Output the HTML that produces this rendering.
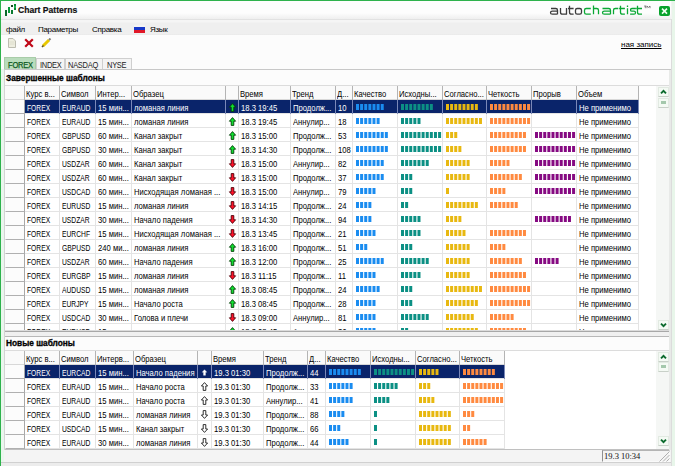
<!DOCTYPE html>
<html><head><meta charset="utf-8">
<style>
*{margin:0;padding:0;box-sizing:border-box}
html,body{width:675px;height:466px;overflow:hidden;background:#f3f3f3;font-family:"Liberation Sans",sans-serif;color:#000}
div,svg,i,span{position:absolute}
.hdr{height:14px;background:#fafafa;border-bottom:1px solid #d8d8d8}
.hc{height:14px;border-right:1px solid #b4b4b4;font-size:8.5px;line-height:16px;padding-left:2px;white-space:nowrap;overflow:hidden;color:#000}
.rh{height:14px;background:#fcfcfc;border-bottom:1px solid #b0b0b0;border-right:1px solid #a8a8a8;border-left:1px solid #fcfcfc}
.row{height:14px;background:#fff;border-bottom:1px solid #e4e4e4}
.row.sel{background:#0a246a;border-bottom-color:#e4e4e4}
.c{height:14px;border-right:1px solid #e4e4e4;font-size:8.5px;line-height:16px;padding-left:2px;white-space:nowrap;overflow:hidden;color:#000}
.c.s{color:#fff;border-right-color:#7a88b8}
.u{position:static;display:inline-block;transform:scaleX(.88);transform-origin:0 0}
.c .u,.hc .u{transform:scaleX(.79)}
.x{position:static;display:inline-block;transform:scaleX(.9);transform-origin:0 0}
i{width:3px;height:6px;display:block}
.ar{overflow:visible}
.sbtn{width:11px;height:10px;background:#f4faf4;border:1px solid #e2eae2;border-bottom-color:#c8d0c8}
</style></head><body>
<!-- window frame -->
<div style="left:0;top:0;width:675px;height:1px;background:#2eb24c"></div>
<div style="left:0;top:0;width:1px;height:466px;background:#2eb24c"></div>
<div style="left:1px;top:1px;width:3px;height:465px;background:#eaf7ed"></div>
<div style="left:672px;top:1px;width:3px;height:465px;background:#e8f6ea"></div>
<div style="left:671px;top:19px;width:1px;height:447px;background:#dcdcdc"></div>
<!-- title bar -->
<div style="left:1px;top:1px;width:670px;height:19px;background:linear-gradient(#fdfdfd 0,#fdfdfd 12px,#efefef 18px)"></div>
<svg style="left:4px;top:4px" width="13" height="12" viewBox="0 0 13 12">
 <rect x="1" y="6" width="2" height="6" fill="#0a6a2a"/>
 <rect x="4" y="3" width="2" height="6" fill="#0a9a3a"/>
 <rect x="7" y="6" width="2" height="4" fill="#0a7a30"/>
 <rect x="7" y="1" width="2" height="2" fill="#1a4a22"/>
 <rect x="10" y="0" width="2" height="6" fill="#0a8a34"/>
 <rect x="10" y="2.5" width="2" height="1" fill="#30e070"/>
</svg>
<div style="left:18px;top:4px;font-size:8.6px;font-weight:bold;color:#111;white-space:nowrap;line-height:12px;-webkit-text-stroke:0.2px #111">Chart Patterns</div>
<svg style="left:0;top:0" width="675" height="20" viewBox="0 0 675 20">
<g fill="none" stroke-width="1.3" stroke-linecap="butt" stroke-linejoin="round">
<path stroke="#3c3c3c" d="M551 8.5 H555.7 Q557.5 8.5 557.5 10.3 V14.2 M557.5 11.2 H552.4 Q550.5 11.2 550.5 12.7 Q550.5 14.2 552.4 14.2 H557.5
M560.5 8 V12.2 Q560.5 14.2 562.5 14.2 H566.5 V8
M569.5 5.8 V12.2 Q569.5 14.2 571.5 14.2 H573.6 M568 8.5 H573.6
M577.2 8.5 H579.8 Q581.5 8.5 581.5 10.3 V12.4 Q581.5 14.2 579.8 14.2 H577.2 Q575.5 14.2 575.5 12.4 V10.3 Q575.5 8.5 577.2 8.5 Z"/>
<path stroke="#0aa834" d="M590.8 8.5 H586.3 Q584.5 8.5 584.5 10.3 V12.4 Q584.5 14.2 586.3 14.2 H590.8
M593.5 5.6 V14.2 M593.5 8.5 H596.7 Q598.5 8.5 598.5 10.3 V14.2
M602.5 8.5 H608.7 Q610.5 8.5 610.5 10.3 V14.2 M610.5 11.2 H604.4 Q602.5 11.2 602.5 12.7 Q602.5 14.2 604.4 14.2 H610.5
M613.5 14.2 V10.3 Q613.5 8.5 615.3 8.5 H618.3
M620.5 5.8 V12.2 Q620.5 14.2 622.5 14.2 H624.9 M619.1 8.5 H624.9
M627.5 8.2 V14.2 M627.5 5.6 V7
M635.9 8.5 H632 Q630.5 8.5 630.5 9.9 Q630.5 11.2 632 11.2 H634 Q635.5 11.2 635.5 12.7 Q635.5 14.2 634 14.2 H630.1
M637.5 5.8 V12.2 Q637.5 14.2 639.5 14.2 H642 M636.2 8.5 H642"/>
<path stroke="#555" stroke-width="0.7" d="M644.2 6 H646.4 M645.3 6 V8.2 M647 8.2 V6 L648.5 7.4 L650 6 V8.2"/>
</g></svg>
<div style="left:659px;top:6px;width:11px;height:10px;background:#08a22c;border-radius:2px"></div>
<svg style="left:659px;top:6px" width="11" height="11" viewBox="0 0 11 11"><path d="M3 2.6 L8 7.6 M8 2.6 L3 7.6" stroke="#f0fff0" stroke-width="1.6"/></svg>
<!-- menu bar -->
<div style="left:1px;top:19px;width:670px;height:1px;background:#e2e2e2"></div>
<div style="left:1px;top:20px;width:670px;height:15px;background:linear-gradient(#f5f5f5 0,#f5f5f5 2px,#efefef 3px,#efefef 14px,#e8e8e8 15px)"></div>
<div style="left:6px;top:24px;font-size:8px;line-height:12px;white-space:nowrap;color:#000;letter-spacing:-0.3px">файл</div>
<div style="left:38px;top:24px;font-size:8px;line-height:12px;white-space:nowrap;color:#000;letter-spacing:-0.3px">Параметры</div>
<div style="left:92px;top:24px;font-size:8px;line-height:12px;white-space:nowrap;color:#000;letter-spacing:-0.3px">Справка</div>
<div style="left:134px;top:25px;width:11px;height:8px">
 <div style="left:0;top:0;width:11px;height:2px;background:#f4f4f4"></div>
 <div style="left:0;top:2px;width:11px;height:3px;background:#1838c8"></div>
 <div style="left:0;top:5px;width:11px;height:3px;background:#e01828"></div>
</div>
<div style="left:150px;top:24px;font-size:8px;line-height:12px;white-space:nowrap;color:#000;letter-spacing:-0.3px">Язык</div>
<!-- toolbar / panel bg -->
<div style="left:1px;top:35px;width:670px;height:34px;background:#fcfcfc"></div>
<svg style="left:8px;top:38px" width="8" height="10" viewBox="0 0 8 10"><path d="M0.5 0.5 H5 L7.5 3 V9.5 H0.5 Z" fill="#eeeee0" stroke="#bcbcb0" stroke-width="1"/><path d="M1.5 4 H6.5 M1.5 6 H6.5" stroke="#d8d8c8" stroke-width="0.8"/></svg>
<svg style="left:24px;top:38px" width="10" height="10" viewBox="0 0 10 10"><path d="M1.2 1.2 L8.8 8.8 M8.8 1.2 L1.2 8.8" stroke="#c00818" stroke-width="2.2"/></svg>
<svg style="left:41px;top:38px" width="11" height="10" viewBox="0 0 11 10"><path d="M2 8 L8 2" stroke="#e8c800" stroke-width="3"/><path d="M8 2 L9.5 0.5" stroke="#808080" stroke-width="2"/><path d="M1 9 L2.5 7.5" stroke="#605020" stroke-width="1.6"/></svg>
<div style="left:621px;top:39px;font-size:8px;line-height:11px;white-space:nowrap;color:#000;text-decoration:underline">ная запись</div>
<!-- tabs -->
<div style="left:4px;top:69px;width:667px;height:1px;background:#c8c8c8"></div>
<div style="left:4px;top:57px;width:32px;height:12px;background:#b9dcbc;border:1px solid #a8cca8;border-bottom:none"></div>
<div style="left:8px;top:59px;font-size:8.5px;line-height:12px;color:#0f5a22;white-space:nowrap;letter-spacing:-0.2px;-webkit-text-stroke:0.25px #0f5a22"><span class="u">FOREX</span></div>
<div style="left:36px;top:58px;width:29px;height:11px;background:#f4f4f4;border:1px solid #cfcfcf;border-bottom:none"></div>
<div style="left:40px;top:59px;font-size:8.5px;line-height:12px;color:#222;white-space:nowrap;letter-spacing:-0.3px"><span class="u">INDEX</span></div>
<div style="left:65px;top:58px;width:38px;height:11px;background:#f4f4f4;border:1px solid #cfcfcf;border-bottom:none"></div>
<div style="left:68px;top:59px;font-size:8.5px;line-height:12px;color:#222;white-space:nowrap;letter-spacing:-0.3px"><span class="u">NASDAQ</span></div>
<div style="left:102px;top:58px;width:30px;height:11px;background:#f4f4f4;border:1px solid #cfcfcf;border-bottom:none"></div>
<div style="left:107px;top:59px;font-size:8.5px;line-height:12px;color:#222;white-space:nowrap;letter-spacing:-0.3px"><span class="u">NYSE</span></div>
<!-- panel 1 -->
<div style="left:4px;top:70px;width:667px;height:261px;background:#fcfcfc"></div>
<div style="left:6px;top:73px;font-size:8.3px;font-weight:bold;line-height:11px;white-space:nowrap;color:#000;-webkit-text-stroke:0.3px #000">Завершенные шаблоны</div>
<div style="left:5px;top:85px;width:651px;height:245px;background:#fff"></div>
<div style="left:656px;top:85px;width:15px;height:245px;background:#f5f7f5"></div>
<div style="left:0;top:0;width:675px;height:330px;overflow:hidden"><div style="left:5px;top:85px;width:666px;height:1px;background:#dcdcdc"></div><div style="left:4px;top:85px;width:1px;height:245px;background:#d0d0d0"></div><div class="hdr" style="left:5px;top:86px;width:633px"></div><div class="hc" style="left:5px;top:86px;width:20px"><span class="x"></span></div><div class="hc" style="left:24px;top:86px;width:36px"><span class="x">Курс в...</span></div><div class="hc" style="left:59px;top:86px;width:37px"><span class="x">Символ</span></div><div class="hc" style="left:95px;top:86px;width:37px"><span class="x">Интер...</span></div><div class="hc" style="left:131px;top:86px;width:95px"><span class="x">Образец</span></div><div class="hc" style="left:225px;top:86px;width:14px"><span class="x"></span></div><div class="hc" style="left:238px;top:86px;width:53px"><span class="x">Время</span></div><div class="hc" style="left:290px;top:86px;width:46px"><span class="x">Тренд</span></div><div class="hc" style="left:335px;top:86px;width:18px"><span class="x">Д...</span></div><div class="hc" style="left:352px;top:86px;width:46px"><span class="x">Качество</span></div><div class="hc" style="left:397px;top:86px;width:46px"><span class="x">Исходны...</span></div><div class="hc" style="left:442px;top:86px;width:45px"><span class="x">Согласно...</span></div><div class="hc" style="left:486px;top:86px;width:46px"><span class="x">Четкость</span></div><div class="hc" style="left:531px;top:86px;width:46px"><span class="x">Прорыв</span></div><div class="hc" style="left:576px;top:86px;width:63px"><span class="x">Объем</span></div><div class="rh" style="left:5px;top:100px;width:20px"></div><div class="row sel" style="left:25px;top:100px;width:614px"></div><div class="c s" style="left:25px;top:100px;width:35px"><span class="u">FOREX</span></div><div class="c s" style="left:60px;top:100px;width:36px"><span class="u">EURAUD</span></div><div class="c s" style="left:96px;top:100px;width:36px"><span class="x">15 мин...</span></div><div class="c s" style="left:132px;top:100px;width:94px"><span class="x">ломаная линия</span></div><div class="c s" style="left:226px;top:100px;width:13px"></div><div class="c s" style="left:239px;top:100px;width:52px"><span class="x">18.3 19:45</span></div><div class="c s" style="left:291px;top:100px;width:45px"><span class="x">Продолж...</span></div><div class="c s" style="left:336px;top:100px;width:17px"><span class="x">10</span></div><div class="c s" style="left:353px;top:100px;width:45px"></div><div class="c s" style="left:398px;top:100px;width:45px"></div><div class="c s" style="left:443px;top:100px;width:44px"></div><div class="c s" style="left:487px;top:100px;width:45px"></div><div class="c s" style="left:532px;top:100px;width:45px"></div><div class="c s" style="left:577px;top:100px;width:62px"><span class="x">Не применимо</span></div><svg class="ar" style="left:229px;top:103px" width="7" height="9" viewBox="0 0 7 9"><path d="M3.5 0.6 L6.6 4.2 L4.8 4.2 L4.8 8.4 L2.2 8.4 L2.2 4.2 L0.4 4.2 Z" fill="#10e030" stroke="#053a08" stroke-width="0.9"/></svg><div class="rh" style="left:5px;top:114px;width:20px"></div><div class="row" style="left:25px;top:114px;width:614px"></div><div class="c" style="left:25px;top:114px;width:35px"><span class="u">FOREX</span></div><div class="c" style="left:60px;top:114px;width:36px"><span class="u">EURAUD</span></div><div class="c" style="left:96px;top:114px;width:36px"><span class="x">15 мин...</span></div><div class="c" style="left:132px;top:114px;width:94px"><span class="x">ломаная линия</span></div><div class="c" style="left:226px;top:114px;width:13px"></div><div class="c" style="left:239px;top:114px;width:52px"><span class="x">18.3 19:45</span></div><div class="c" style="left:291px;top:114px;width:45px"><span class="x">Аннулир...</span></div><div class="c" style="left:336px;top:114px;width:17px"><span class="x">18</span></div><div class="c" style="left:353px;top:114px;width:45px"></div><div class="c" style="left:398px;top:114px;width:45px"></div><div class="c" style="left:443px;top:114px;width:44px"></div><div class="c" style="left:487px;top:114px;width:45px"></div><div class="c" style="left:532px;top:114px;width:45px"></div><div class="c" style="left:577px;top:114px;width:62px"><span class="x">Не применимо</span></div><svg class="ar" style="left:229px;top:117px" width="7" height="9" viewBox="0 0 7 9"><path d="M3.5 0.6 L6.6 4.2 L4.8 4.2 L4.8 8.4 L2.2 8.4 L2.2 4.2 L0.4 4.2 Z" fill="#10e030" stroke="#053a08" stroke-width="0.9"/></svg><div class="rh" style="left:5px;top:128px;width:20px"></div><div class="row" style="left:25px;top:128px;width:614px"></div><div class="c" style="left:25px;top:128px;width:35px"><span class="u">FOREX</span></div><div class="c" style="left:60px;top:128px;width:36px"><span class="u">GBPUSD</span></div><div class="c" style="left:96px;top:128px;width:36px"><span class="x">60 мин...</span></div><div class="c" style="left:132px;top:128px;width:94px"><span class="x">Канал закрыт</span></div><div class="c" style="left:226px;top:128px;width:13px"></div><div class="c" style="left:239px;top:128px;width:52px"><span class="x">18.3 15:00</span></div><div class="c" style="left:291px;top:128px;width:45px"><span class="x">Продолж...</span></div><div class="c" style="left:336px;top:128px;width:17px"><span class="x">53</span></div><div class="c" style="left:353px;top:128px;width:45px"></div><div class="c" style="left:398px;top:128px;width:45px"></div><div class="c" style="left:443px;top:128px;width:44px"></div><div class="c" style="left:487px;top:128px;width:45px"></div><div class="c" style="left:532px;top:128px;width:45px"></div><div class="c" style="left:577px;top:128px;width:62px"><span class="x">Не применимо</span></div><svg class="ar" style="left:229px;top:131px" width="7" height="9" viewBox="0 0 7 9"><path d="M3.5 0.6 L6.6 4.2 L4.8 4.2 L4.8 8.4 L2.2 8.4 L2.2 4.2 L0.4 4.2 Z" fill="#10e030" stroke="#053a08" stroke-width="0.9"/></svg><div class="rh" style="left:5px;top:142px;width:20px"></div><div class="row" style="left:25px;top:142px;width:614px"></div><div class="c" style="left:25px;top:142px;width:35px"><span class="u">FOREX</span></div><div class="c" style="left:60px;top:142px;width:36px"><span class="u">GBPUSD</span></div><div class="c" style="left:96px;top:142px;width:36px"><span class="x">30 мин...</span></div><div class="c" style="left:132px;top:142px;width:94px"><span class="x">Канал закрыт</span></div><div class="c" style="left:226px;top:142px;width:13px"></div><div class="c" style="left:239px;top:142px;width:52px"><span class="x">18.3 14:30</span></div><div class="c" style="left:291px;top:142px;width:45px"><span class="x">Продолж...</span></div><div class="c" style="left:336px;top:142px;width:17px"><span class="x">108</span></div><div class="c" style="left:353px;top:142px;width:45px"></div><div class="c" style="left:398px;top:142px;width:45px"></div><div class="c" style="left:443px;top:142px;width:44px"></div><div class="c" style="left:487px;top:142px;width:45px"></div><div class="c" style="left:532px;top:142px;width:45px"></div><div class="c" style="left:577px;top:142px;width:62px"><span class="x">Не применимо</span></div><svg class="ar" style="left:229px;top:145px" width="7" height="9" viewBox="0 0 7 9"><path d="M3.5 0.6 L6.6 4.2 L4.8 4.2 L4.8 8.4 L2.2 8.4 L2.2 4.2 L0.4 4.2 Z" fill="#10e030" stroke="#053a08" stroke-width="0.9"/></svg><div class="rh" style="left:5px;top:156px;width:20px"></div><div class="row" style="left:25px;top:156px;width:614px"></div><div class="c" style="left:25px;top:156px;width:35px"><span class="u">FOREX</span></div><div class="c" style="left:60px;top:156px;width:36px"><span class="u">USDZAR</span></div><div class="c" style="left:96px;top:156px;width:36px"><span class="x">60 мин...</span></div><div class="c" style="left:132px;top:156px;width:94px"><span class="x">Канал закрыт</span></div><div class="c" style="left:226px;top:156px;width:13px"></div><div class="c" style="left:239px;top:156px;width:52px"><span class="x">18.3 15:00</span></div><div class="c" style="left:291px;top:156px;width:45px"><span class="x">Аннулир...</span></div><div class="c" style="left:336px;top:156px;width:17px"><span class="x">82</span></div><div class="c" style="left:353px;top:156px;width:45px"></div><div class="c" style="left:398px;top:156px;width:45px"></div><div class="c" style="left:443px;top:156px;width:44px"></div><div class="c" style="left:487px;top:156px;width:45px"></div><div class="c" style="left:532px;top:156px;width:45px"></div><div class="c" style="left:577px;top:156px;width:62px"><span class="x">Не применимо</span></div><svg class="ar" style="left:229px;top:159px" width="7" height="9" viewBox="0 0 7 9"><path d="M3.5 8.4 L6.6 4.8 L4.8 4.8 L4.8 0.6 L2.2 0.6 L2.2 4.8 L0.4 4.8 Z" fill="#ff1028" stroke="#4a0008" stroke-width="0.9"/></svg><div class="rh" style="left:5px;top:170px;width:20px"></div><div class="row" style="left:25px;top:170px;width:614px"></div><div class="c" style="left:25px;top:170px;width:35px"><span class="u">FOREX</span></div><div class="c" style="left:60px;top:170px;width:36px"><span class="u">USDZAR</span></div><div class="c" style="left:96px;top:170px;width:36px"><span class="x">60 мин...</span></div><div class="c" style="left:132px;top:170px;width:94px"><span class="x">Канал закрыт</span></div><div class="c" style="left:226px;top:170px;width:13px"></div><div class="c" style="left:239px;top:170px;width:52px"><span class="x">18.3 15:00</span></div><div class="c" style="left:291px;top:170px;width:45px"><span class="x">Продолж...</span></div><div class="c" style="left:336px;top:170px;width:17px"><span class="x">37</span></div><div class="c" style="left:353px;top:170px;width:45px"></div><div class="c" style="left:398px;top:170px;width:45px"></div><div class="c" style="left:443px;top:170px;width:44px"></div><div class="c" style="left:487px;top:170px;width:45px"></div><div class="c" style="left:532px;top:170px;width:45px"></div><div class="c" style="left:577px;top:170px;width:62px"><span class="x">Не применимо</span></div><svg class="ar" style="left:229px;top:173px" width="7" height="9" viewBox="0 0 7 9"><path d="M3.5 8.4 L6.6 4.8 L4.8 4.8 L4.8 0.6 L2.2 0.6 L2.2 4.8 L0.4 4.8 Z" fill="#ff1028" stroke="#4a0008" stroke-width="0.9"/></svg><div class="rh" style="left:5px;top:184px;width:20px"></div><div class="row" style="left:25px;top:184px;width:614px"></div><div class="c" style="left:25px;top:184px;width:35px"><span class="u">FOREX</span></div><div class="c" style="left:60px;top:184px;width:36px"><span class="u">USDCAD</span></div><div class="c" style="left:96px;top:184px;width:36px"><span class="x">60 мин...</span></div><div class="c" style="left:132px;top:184px;width:94px"><span class="x">Нисходящая ломаная ...</span></div><div class="c" style="left:226px;top:184px;width:13px"></div><div class="c" style="left:239px;top:184px;width:52px"><span class="x">18.3 15:00</span></div><div class="c" style="left:291px;top:184px;width:45px"><span class="x">Аннулир...</span></div><div class="c" style="left:336px;top:184px;width:17px"><span class="x">79</span></div><div class="c" style="left:353px;top:184px;width:45px"></div><div class="c" style="left:398px;top:184px;width:45px"></div><div class="c" style="left:443px;top:184px;width:44px"></div><div class="c" style="left:487px;top:184px;width:45px"></div><div class="c" style="left:532px;top:184px;width:45px"></div><div class="c" style="left:577px;top:184px;width:62px"><span class="x">Не применимо</span></div><svg class="ar" style="left:229px;top:187px" width="7" height="9" viewBox="0 0 7 9"><path d="M3.5 8.4 L6.6 4.8 L4.8 4.8 L4.8 0.6 L2.2 0.6 L2.2 4.8 L0.4 4.8 Z" fill="#ff1028" stroke="#4a0008" stroke-width="0.9"/></svg><div class="rh" style="left:5px;top:198px;width:20px"></div><div class="row" style="left:25px;top:198px;width:614px"></div><div class="c" style="left:25px;top:198px;width:35px"><span class="u">FOREX</span></div><div class="c" style="left:60px;top:198px;width:36px"><span class="u">EURUSD</span></div><div class="c" style="left:96px;top:198px;width:36px"><span class="x">15 мин...</span></div><div class="c" style="left:132px;top:198px;width:94px"><span class="x">ломаная линия</span></div><div class="c" style="left:226px;top:198px;width:13px"></div><div class="c" style="left:239px;top:198px;width:52px"><span class="x">18.3 14:15</span></div><div class="c" style="left:291px;top:198px;width:45px"><span class="x">Продолж...</span></div><div class="c" style="left:336px;top:198px;width:17px"><span class="x">24</span></div><div class="c" style="left:353px;top:198px;width:45px"></div><div class="c" style="left:398px;top:198px;width:45px"></div><div class="c" style="left:443px;top:198px;width:44px"></div><div class="c" style="left:487px;top:198px;width:45px"></div><div class="c" style="left:532px;top:198px;width:45px"></div><div class="c" style="left:577px;top:198px;width:62px"><span class="x">Не применимо</span></div><svg class="ar" style="left:229px;top:201px" width="7" height="9" viewBox="0 0 7 9"><path d="M3.5 8.4 L6.6 4.8 L4.8 4.8 L4.8 0.6 L2.2 0.6 L2.2 4.8 L0.4 4.8 Z" fill="#ff1028" stroke="#4a0008" stroke-width="0.9"/></svg><div class="rh" style="left:5px;top:212px;width:20px"></div><div class="row" style="left:25px;top:212px;width:614px"></div><div class="c" style="left:25px;top:212px;width:35px"><span class="u">FOREX</span></div><div class="c" style="left:60px;top:212px;width:36px"><span class="u">USDZAR</span></div><div class="c" style="left:96px;top:212px;width:36px"><span class="x">30 мин...</span></div><div class="c" style="left:132px;top:212px;width:94px"><span class="x">Начало падения</span></div><div class="c" style="left:226px;top:212px;width:13px"></div><div class="c" style="left:239px;top:212px;width:52px"><span class="x">18.3 14:30</span></div><div class="c" style="left:291px;top:212px;width:45px"><span class="x">Продолж...</span></div><div class="c" style="left:336px;top:212px;width:17px"><span class="x">94</span></div><div class="c" style="left:353px;top:212px;width:45px"></div><div class="c" style="left:398px;top:212px;width:45px"></div><div class="c" style="left:443px;top:212px;width:44px"></div><div class="c" style="left:487px;top:212px;width:45px"></div><div class="c" style="left:532px;top:212px;width:45px"></div><div class="c" style="left:577px;top:212px;width:62px"><span class="x">Не применимо</span></div><svg class="ar" style="left:229px;top:215px" width="7" height="9" viewBox="0 0 7 9"><path d="M3.5 8.4 L6.6 4.8 L4.8 4.8 L4.8 0.6 L2.2 0.6 L2.2 4.8 L0.4 4.8 Z" fill="#ff1028" stroke="#4a0008" stroke-width="0.9"/></svg><div class="rh" style="left:5px;top:226px;width:20px"></div><div class="row" style="left:25px;top:226px;width:614px"></div><div class="c" style="left:25px;top:226px;width:35px"><span class="u">FOREX</span></div><div class="c" style="left:60px;top:226px;width:36px"><span class="u">EURCHF</span></div><div class="c" style="left:96px;top:226px;width:36px"><span class="x">15 мин...</span></div><div class="c" style="left:132px;top:226px;width:94px"><span class="x">Нисходящая ломаная ...</span></div><div class="c" style="left:226px;top:226px;width:13px"></div><div class="c" style="left:239px;top:226px;width:52px"><span class="x">18.3 13:45</span></div><div class="c" style="left:291px;top:226px;width:45px"><span class="x">Продолж...</span></div><div class="c" style="left:336px;top:226px;width:17px"><span class="x">21</span></div><div class="c" style="left:353px;top:226px;width:45px"></div><div class="c" style="left:398px;top:226px;width:45px"></div><div class="c" style="left:443px;top:226px;width:44px"></div><div class="c" style="left:487px;top:226px;width:45px"></div><div class="c" style="left:532px;top:226px;width:45px"></div><div class="c" style="left:577px;top:226px;width:62px"><span class="x">Не применимо</span></div><svg class="ar" style="left:229px;top:229px" width="7" height="9" viewBox="0 0 7 9"><path d="M3.5 8.4 L6.6 4.8 L4.8 4.8 L4.8 0.6 L2.2 0.6 L2.2 4.8 L0.4 4.8 Z" fill="#ff1028" stroke="#4a0008" stroke-width="0.9"/></svg><div class="rh" style="left:5px;top:240px;width:20px"></div><div class="row" style="left:25px;top:240px;width:614px"></div><div class="c" style="left:25px;top:240px;width:35px"><span class="u">FOREX</span></div><div class="c" style="left:60px;top:240px;width:36px"><span class="u">GBPUSD</span></div><div class="c" style="left:96px;top:240px;width:36px"><span class="x">240 ми...</span></div><div class="c" style="left:132px;top:240px;width:94px"><span class="x">ломаная линия</span></div><div class="c" style="left:226px;top:240px;width:13px"></div><div class="c" style="left:239px;top:240px;width:52px"><span class="x">18.3 16:00</span></div><div class="c" style="left:291px;top:240px;width:45px"><span class="x">Продолж...</span></div><div class="c" style="left:336px;top:240px;width:17px"><span class="x">51</span></div><div class="c" style="left:353px;top:240px;width:45px"></div><div class="c" style="left:398px;top:240px;width:45px"></div><div class="c" style="left:443px;top:240px;width:44px"></div><div class="c" style="left:487px;top:240px;width:45px"></div><div class="c" style="left:532px;top:240px;width:45px"></div><div class="c" style="left:577px;top:240px;width:62px"><span class="x">Не применимо</span></div><svg class="ar" style="left:229px;top:243px" width="7" height="9" viewBox="0 0 7 9"><path d="M3.5 0.6 L6.6 4.2 L4.8 4.2 L4.8 8.4 L2.2 8.4 L2.2 4.2 L0.4 4.2 Z" fill="#10e030" stroke="#053a08" stroke-width="0.9"/></svg><div class="rh" style="left:5px;top:254px;width:20px"></div><div class="row" style="left:25px;top:254px;width:614px"></div><div class="c" style="left:25px;top:254px;width:35px"><span class="u">FOREX</span></div><div class="c" style="left:60px;top:254px;width:36px"><span class="u">USDZAR</span></div><div class="c" style="left:96px;top:254px;width:36px"><span class="x">60 мин...</span></div><div class="c" style="left:132px;top:254px;width:94px"><span class="x">Начало падения</span></div><div class="c" style="left:226px;top:254px;width:13px"></div><div class="c" style="left:239px;top:254px;width:52px"><span class="x">18.3 12:00</span></div><div class="c" style="left:291px;top:254px;width:45px"><span class="x">Продолж...</span></div><div class="c" style="left:336px;top:254px;width:17px"><span class="x">25</span></div><div class="c" style="left:353px;top:254px;width:45px"></div><div class="c" style="left:398px;top:254px;width:45px"></div><div class="c" style="left:443px;top:254px;width:44px"></div><div class="c" style="left:487px;top:254px;width:45px"></div><div class="c" style="left:532px;top:254px;width:45px"></div><div class="c" style="left:577px;top:254px;width:62px"><span class="x">Не применимо</span></div><svg class="ar" style="left:229px;top:257px" width="7" height="9" viewBox="0 0 7 9"><path d="M3.5 0.6 L6.6 4.2 L4.8 4.2 L4.8 8.4 L2.2 8.4 L2.2 4.2 L0.4 4.2 Z" fill="#10e030" stroke="#053a08" stroke-width="0.9"/></svg><div class="rh" style="left:5px;top:268px;width:20px"></div><div class="row" style="left:25px;top:268px;width:614px"></div><div class="c" style="left:25px;top:268px;width:35px"><span class="u">FOREX</span></div><div class="c" style="left:60px;top:268px;width:36px"><span class="u">EURGBP</span></div><div class="c" style="left:96px;top:268px;width:36px"><span class="x">15 мин...</span></div><div class="c" style="left:132px;top:268px;width:94px"><span class="x">ломаная линия</span></div><div class="c" style="left:226px;top:268px;width:13px"></div><div class="c" style="left:239px;top:268px;width:52px"><span class="x">18.3 11:15</span></div><div class="c" style="left:291px;top:268px;width:45px"><span class="x">Продолж...</span></div><div class="c" style="left:336px;top:268px;width:17px"><span class="x">11</span></div><div class="c" style="left:353px;top:268px;width:45px"></div><div class="c" style="left:398px;top:268px;width:45px"></div><div class="c" style="left:443px;top:268px;width:44px"></div><div class="c" style="left:487px;top:268px;width:45px"></div><div class="c" style="left:532px;top:268px;width:45px"></div><div class="c" style="left:577px;top:268px;width:62px"><span class="x">Не применимо</span></div><svg class="ar" style="left:229px;top:271px" width="7" height="9" viewBox="0 0 7 9"><path d="M3.5 8.4 L6.6 4.8 L4.8 4.8 L4.8 0.6 L2.2 0.6 L2.2 4.8 L0.4 4.8 Z" fill="#ff1028" stroke="#4a0008" stroke-width="0.9"/></svg><div class="rh" style="left:5px;top:282px;width:20px"></div><div class="row" style="left:25px;top:282px;width:614px"></div><div class="c" style="left:25px;top:282px;width:35px"><span class="u">FOREX</span></div><div class="c" style="left:60px;top:282px;width:36px"><span class="u">AUDUSD</span></div><div class="c" style="left:96px;top:282px;width:36px"><span class="x">15 мин...</span></div><div class="c" style="left:132px;top:282px;width:94px"><span class="x">ломаная линия</span></div><div class="c" style="left:226px;top:282px;width:13px"></div><div class="c" style="left:239px;top:282px;width:52px"><span class="x">18.3 08:45</span></div><div class="c" style="left:291px;top:282px;width:45px"><span class="x">Продолж...</span></div><div class="c" style="left:336px;top:282px;width:17px"><span class="x">24</span></div><div class="c" style="left:353px;top:282px;width:45px"></div><div class="c" style="left:398px;top:282px;width:45px"></div><div class="c" style="left:443px;top:282px;width:44px"></div><div class="c" style="left:487px;top:282px;width:45px"></div><div class="c" style="left:532px;top:282px;width:45px"></div><div class="c" style="left:577px;top:282px;width:62px"><span class="x">Не применимо</span></div><svg class="ar" style="left:229px;top:285px" width="7" height="9" viewBox="0 0 7 9"><path d="M3.5 0.6 L6.6 4.2 L4.8 4.2 L4.8 8.4 L2.2 8.4 L2.2 4.2 L0.4 4.2 Z" fill="#10e030" stroke="#053a08" stroke-width="0.9"/></svg><div class="rh" style="left:5px;top:296px;width:20px"></div><div class="row" style="left:25px;top:296px;width:614px"></div><div class="c" style="left:25px;top:296px;width:35px"><span class="u">FOREX</span></div><div class="c" style="left:60px;top:296px;width:36px"><span class="u">EURJPY</span></div><div class="c" style="left:96px;top:296px;width:36px"><span class="x">15 мин...</span></div><div class="c" style="left:132px;top:296px;width:94px"><span class="x">Начало роста</span></div><div class="c" style="left:226px;top:296px;width:13px"></div><div class="c" style="left:239px;top:296px;width:52px"><span class="x">18.3 08:45</span></div><div class="c" style="left:291px;top:296px;width:45px"><span class="x">Продолж...</span></div><div class="c" style="left:336px;top:296px;width:17px"><span class="x">28</span></div><div class="c" style="left:353px;top:296px;width:45px"></div><div class="c" style="left:398px;top:296px;width:45px"></div><div class="c" style="left:443px;top:296px;width:44px"></div><div class="c" style="left:487px;top:296px;width:45px"></div><div class="c" style="left:532px;top:296px;width:45px"></div><div class="c" style="left:577px;top:296px;width:62px"><span class="x">Не применимо</span></div><svg class="ar" style="left:229px;top:299px" width="7" height="9" viewBox="0 0 7 9"><path d="M3.5 0.6 L6.6 4.2 L4.8 4.2 L4.8 8.4 L2.2 8.4 L2.2 4.2 L0.4 4.2 Z" fill="#10e030" stroke="#053a08" stroke-width="0.9"/></svg><div class="rh" style="left:5px;top:310px;width:20px"></div><div class="row" style="left:25px;top:310px;width:614px"></div><div class="c" style="left:25px;top:310px;width:35px"><span class="u">FOREX</span></div><div class="c" style="left:60px;top:310px;width:36px"><span class="u">USDCAD</span></div><div class="c" style="left:96px;top:310px;width:36px"><span class="x">30 мин...</span></div><div class="c" style="left:132px;top:310px;width:94px"><span class="x">Голова и плечи</span></div><div class="c" style="left:226px;top:310px;width:13px"></div><div class="c" style="left:239px;top:310px;width:52px"><span class="x">18.3 09:00</span></div><div class="c" style="left:291px;top:310px;width:45px"><span class="x">Аннулир...</span></div><div class="c" style="left:336px;top:310px;width:17px"><span class="x">81</span></div><div class="c" style="left:353px;top:310px;width:45px"></div><div class="c" style="left:398px;top:310px;width:45px"></div><div class="c" style="left:443px;top:310px;width:44px"></div><div class="c" style="left:487px;top:310px;width:45px"></div><div class="c" style="left:532px;top:310px;width:45px"></div><div class="c" style="left:577px;top:310px;width:62px"><span class="x">Не применимо</span></div><svg class="ar" style="left:229px;top:313px" width="7" height="9" viewBox="0 0 7 9"><path d="M3.5 8.4 L6.6 4.8 L4.8 4.8 L4.8 0.6 L2.2 0.6 L2.2 4.8 L0.4 4.8 Z" fill="#ff1028" stroke="#4a0008" stroke-width="0.9"/></svg><div class="rh" style="left:5px;top:324px;width:20px"></div><div class="row" style="left:25px;top:324px;width:614px"></div><div class="c" style="left:25px;top:324px;width:35px"><span class="u">FOREX</span></div><div class="c" style="left:60px;top:324px;width:36px"><span class="u">EURUSD</span></div><div class="c" style="left:96px;top:324px;width:36px"><span class="x">15 мин...</span></div><div class="c" style="left:132px;top:324px;width:94px"><span class="x">ломаная линия</span></div><div class="c" style="left:226px;top:324px;width:13px"></div><div class="c" style="left:239px;top:324px;width:52px"><span class="x">18.3 08:45</span></div><div class="c" style="left:291px;top:324px;width:45px"><span class="x">Аннулир...</span></div><div class="c" style="left:336px;top:324px;width:17px"><span class="x">36</span></div><div class="c" style="left:353px;top:324px;width:45px"></div><div class="c" style="left:398px;top:324px;width:45px"></div><div class="c" style="left:443px;top:324px;width:44px"></div><div class="c" style="left:487px;top:324px;width:45px"></div><div class="c" style="left:532px;top:324px;width:45px"></div><div class="c" style="left:577px;top:324px;width:62px"><span class="x">Не применимо</span></div><svg class="ar" style="left:229px;top:327px" width="7" height="9" viewBox="0 0 7 9"><path d="M3.5 0.6 L6.6 4.2 L4.8 4.2 L4.8 8.4 L2.2 8.4 L2.2 4.2 L0.4 4.2 Z" fill="#10e030" stroke="#053a08" stroke-width="0.9"/></svg><svg style="left:0;top:0" width="675" height="466"><rect x="356.00" y="104" width="3.00" height="6" fill="#1a8cf0"/><rect x="360.12" y="104" width="3.00" height="6" fill="#1a8cf0"/><rect x="364.24" y="104" width="3.00" height="6" fill="#1a8cf0"/><rect x="368.36" y="104" width="3.00" height="6" fill="#1a8cf0"/><rect x="372.48" y="104" width="3.00" height="6" fill="#1a8cf0"/><rect x="376.60" y="104" width="3.00" height="6" fill="#1a8cf0"/><rect x="380.72" y="104" width="3.00" height="6" fill="#1a8cf0"/><rect x="401.00" y="104" width="3.00" height="6" fill="#0c9084"/><rect x="405.12" y="104" width="3.00" height="6" fill="#0c9084"/><rect x="409.24" y="104" width="3.00" height="6" fill="#0c9084"/><rect x="413.36" y="104" width="3.00" height="6" fill="#0c9084"/><rect x="417.48" y="104" width="3.00" height="6" fill="#0c9084"/><rect x="421.60" y="104" width="3.00" height="6" fill="#0c9084"/><rect x="425.72" y="104" width="3.00" height="6" fill="#0c9084"/><rect x="429.84" y="104" width="3.00" height="6" fill="#0c9084"/><rect x="446.00" y="104" width="3.00" height="6" fill="#e8b810"/><rect x="450.12" y="104" width="3.00" height="6" fill="#e8b810"/><rect x="454.24" y="104" width="3.00" height="6" fill="#e8b810"/><rect x="458.36" y="104" width="3.00" height="6" fill="#e8b810"/><rect x="462.48" y="104" width="3.00" height="6" fill="#e8b810"/><rect x="466.60" y="104" width="3.00" height="6" fill="#e8b810"/><rect x="470.72" y="104" width="3.00" height="6" fill="#e8b810"/><rect x="474.84" y="104" width="3.00" height="6" fill="#e8b810"/><rect x="490.00" y="104" width="3.00" height="6" fill="#ff8a40"/><rect x="494.12" y="104" width="3.00" height="6" fill="#ff8a40"/><rect x="498.24" y="104" width="3.00" height="6" fill="#ff8a40"/><rect x="502.36" y="104" width="3.00" height="6" fill="#ff8a40"/><rect x="506.48" y="104" width="3.00" height="6" fill="#ff8a40"/><rect x="510.60" y="104" width="3.00" height="6" fill="#ff8a40"/><rect x="514.72" y="104" width="3.00" height="6" fill="#ff8a40"/><rect x="518.84" y="104" width="3.00" height="6" fill="#ff8a40"/><rect x="522.96" y="104" width="3.00" height="6" fill="#ff8a40"/><rect x="527.08" y="104" width="3.00" height="6" fill="#ff8a40"/><rect x="356.00" y="118" width="3.00" height="6" fill="#1a8cf0"/><rect x="360.12" y="118" width="3.00" height="6" fill="#1a8cf0"/><rect x="364.24" y="118" width="3.00" height="6" fill="#1a8cf0"/><rect x="368.36" y="118" width="3.00" height="6" fill="#1a8cf0"/><rect x="372.48" y="118" width="3.00" height="6" fill="#1a8cf0"/><rect x="376.60" y="118" width="3.00" height="6" fill="#1a8cf0"/><rect x="401.00" y="118" width="3.00" height="6" fill="#0c9084"/><rect x="405.12" y="118" width="3.00" height="6" fill="#0c9084"/><rect x="409.24" y="118" width="3.00" height="6" fill="#0c9084"/><rect x="413.36" y="118" width="3.00" height="6" fill="#0c9084"/><rect x="417.48" y="118" width="3.00" height="6" fill="#0c9084"/><rect x="446.00" y="118" width="3.00" height="6" fill="#e8b810"/><rect x="450.12" y="118" width="3.00" height="6" fill="#e8b810"/><rect x="454.24" y="118" width="3.00" height="6" fill="#e8b810"/><rect x="458.36" y="118" width="3.00" height="6" fill="#e8b810"/><rect x="462.48" y="118" width="3.00" height="6" fill="#e8b810"/><rect x="466.60" y="118" width="3.00" height="6" fill="#e8b810"/><rect x="470.72" y="118" width="3.00" height="6" fill="#e8b810"/><rect x="474.84" y="118" width="3.00" height="6" fill="#e8b810"/><rect x="478.96" y="118" width="3.00" height="6" fill="#e8b810"/><rect x="490.00" y="118" width="3.00" height="6" fill="#ff8a40"/><rect x="494.12" y="118" width="3.00" height="6" fill="#ff8a40"/><rect x="498.24" y="118" width="3.00" height="6" fill="#ff8a40"/><rect x="502.36" y="118" width="3.00" height="6" fill="#ff8a40"/><rect x="506.48" y="118" width="3.00" height="6" fill="#ff8a40"/><rect x="510.60" y="118" width="3.00" height="6" fill="#ff8a40"/><rect x="514.72" y="118" width="3.00" height="6" fill="#ff8a40"/><rect x="518.84" y="118" width="3.00" height="6" fill="#ff8a40"/><rect x="522.96" y="118" width="3.00" height="6" fill="#ff8a40"/><rect x="527.08" y="118" width="3.00" height="6" fill="#ff8a40"/><rect x="356.00" y="132" width="3.00" height="6" fill="#1a8cf0"/><rect x="360.12" y="132" width="3.00" height="6" fill="#1a8cf0"/><rect x="364.24" y="132" width="3.00" height="6" fill="#1a8cf0"/><rect x="368.36" y="132" width="3.00" height="6" fill="#1a8cf0"/><rect x="372.48" y="132" width="3.00" height="6" fill="#1a8cf0"/><rect x="376.60" y="132" width="3.00" height="6" fill="#1a8cf0"/><rect x="380.72" y="132" width="3.00" height="6" fill="#1a8cf0"/><rect x="384.84" y="132" width="3.00" height="6" fill="#1a8cf0"/><rect x="401.00" y="132" width="3.00" height="6" fill="#0c9084"/><rect x="405.12" y="132" width="3.00" height="6" fill="#0c9084"/><rect x="409.24" y="132" width="3.00" height="6" fill="#0c9084"/><rect x="413.36" y="132" width="3.00" height="6" fill="#0c9084"/><rect x="417.48" y="132" width="3.00" height="6" fill="#0c9084"/><rect x="421.60" y="132" width="3.00" height="6" fill="#0c9084"/><rect x="425.72" y="132" width="3.00" height="6" fill="#0c9084"/><rect x="429.84" y="132" width="3.00" height="6" fill="#0c9084"/><rect x="433.96" y="132" width="3.00" height="6" fill="#0c9084"/><rect x="438.08" y="132" width="3.00" height="6" fill="#0c9084"/><rect x="446.00" y="132" width="3.00" height="6" fill="#e8b810"/><rect x="450.12" y="132" width="3.00" height="6" fill="#e8b810"/><rect x="454.24" y="132" width="3.00" height="6" fill="#e8b810"/><rect x="490.00" y="132" width="3.00" height="6" fill="#ff8a40"/><rect x="494.12" y="132" width="3.00" height="6" fill="#ff8a40"/><rect x="498.24" y="132" width="3.00" height="6" fill="#ff8a40"/><rect x="502.36" y="132" width="3.00" height="6" fill="#ff8a40"/><rect x="506.48" y="132" width="3.00" height="6" fill="#ff8a40"/><rect x="510.60" y="132" width="3.00" height="6" fill="#ff8a40"/><rect x="514.72" y="132" width="3.00" height="6" fill="#ff8a40"/><rect x="518.84" y="132" width="3.00" height="6" fill="#ff8a40"/><rect x="522.96" y="132" width="3.00" height="6" fill="#ff8a40"/><rect x="535.00" y="132" width="3.00" height="6" fill="#860a82"/><rect x="539.12" y="132" width="3.00" height="6" fill="#860a82"/><rect x="543.24" y="132" width="3.00" height="6" fill="#860a82"/><rect x="547.36" y="132" width="3.00" height="6" fill="#860a82"/><rect x="551.48" y="132" width="3.00" height="6" fill="#860a82"/><rect x="555.60" y="132" width="3.00" height="6" fill="#860a82"/><rect x="559.72" y="132" width="3.00" height="6" fill="#860a82"/><rect x="563.84" y="132" width="3.00" height="6" fill="#860a82"/><rect x="567.96" y="132" width="3.00" height="6" fill="#860a82"/><rect x="572.08" y="132" width="3.00" height="6" fill="#860a82"/><rect x="356.00" y="146" width="3.00" height="6" fill="#1a8cf0"/><rect x="360.12" y="146" width="3.00" height="6" fill="#1a8cf0"/><rect x="364.24" y="146" width="3.00" height="6" fill="#1a8cf0"/><rect x="368.36" y="146" width="3.00" height="6" fill="#1a8cf0"/><rect x="372.48" y="146" width="3.00" height="6" fill="#1a8cf0"/><rect x="376.60" y="146" width="3.00" height="6" fill="#1a8cf0"/><rect x="380.72" y="146" width="3.00" height="6" fill="#1a8cf0"/><rect x="384.84" y="146" width="3.00" height="6" fill="#1a8cf0"/><rect x="401.00" y="146" width="3.00" height="6" fill="#0c9084"/><rect x="405.12" y="146" width="3.00" height="6" fill="#0c9084"/><rect x="409.24" y="146" width="3.00" height="6" fill="#0c9084"/><rect x="413.36" y="146" width="3.00" height="6" fill="#0c9084"/><rect x="417.48" y="146" width="3.00" height="6" fill="#0c9084"/><rect x="421.60" y="146" width="3.00" height="6" fill="#0c9084"/><rect x="425.72" y="146" width="3.00" height="6" fill="#0c9084"/><rect x="429.84" y="146" width="3.00" height="6" fill="#0c9084"/><rect x="433.96" y="146" width="3.00" height="6" fill="#0c9084"/><rect x="438.08" y="146" width="3.00" height="6" fill="#0c9084"/><rect x="446.00" y="146" width="3.00" height="6" fill="#e8b810"/><rect x="450.12" y="146" width="3.00" height="6" fill="#e8b810"/><rect x="454.24" y="146" width="3.00" height="6" fill="#e8b810"/><rect x="458.36" y="146" width="3.00" height="6" fill="#e8b810"/><rect x="490.00" y="146" width="3.00" height="6" fill="#ff8a40"/><rect x="494.12" y="146" width="3.00" height="6" fill="#ff8a40"/><rect x="498.24" y="146" width="3.00" height="6" fill="#ff8a40"/><rect x="502.36" y="146" width="3.00" height="6" fill="#ff8a40"/><rect x="506.48" y="146" width="3.00" height="6" fill="#ff8a40"/><rect x="510.60" y="146" width="3.00" height="6" fill="#ff8a40"/><rect x="514.72" y="146" width="3.00" height="6" fill="#ff8a40"/><rect x="518.84" y="146" width="3.00" height="6" fill="#ff8a40"/><rect x="522.96" y="146" width="3.00" height="6" fill="#ff8a40"/><rect x="535.00" y="146" width="3.00" height="6" fill="#860a82"/><rect x="539.12" y="146" width="3.00" height="6" fill="#860a82"/><rect x="543.24" y="146" width="3.00" height="6" fill="#860a82"/><rect x="547.36" y="146" width="3.00" height="6" fill="#860a82"/><rect x="551.48" y="146" width="3.00" height="6" fill="#860a82"/><rect x="555.60" y="146" width="3.00" height="6" fill="#860a82"/><rect x="559.72" y="146" width="3.00" height="6" fill="#860a82"/><rect x="563.84" y="146" width="3.00" height="6" fill="#860a82"/><rect x="567.96" y="146" width="3.00" height="6" fill="#860a82"/><rect x="572.08" y="146" width="3.00" height="6" fill="#860a82"/><rect x="356.00" y="160" width="3.00" height="6" fill="#1a8cf0"/><rect x="360.12" y="160" width="3.00" height="6" fill="#1a8cf0"/><rect x="364.24" y="160" width="3.00" height="6" fill="#1a8cf0"/><rect x="368.36" y="160" width="3.00" height="6" fill="#1a8cf0"/><rect x="372.48" y="160" width="3.00" height="6" fill="#1a8cf0"/><rect x="376.60" y="160" width="3.00" height="6" fill="#1a8cf0"/><rect x="380.72" y="160" width="3.00" height="6" fill="#1a8cf0"/><rect x="401.00" y="160" width="3.00" height="6" fill="#0c9084"/><rect x="405.12" y="160" width="3.00" height="6" fill="#0c9084"/><rect x="409.24" y="160" width="3.00" height="6" fill="#0c9084"/><rect x="413.36" y="160" width="3.00" height="6" fill="#0c9084"/><rect x="417.48" y="160" width="3.00" height="6" fill="#0c9084"/><rect x="421.60" y="160" width="3.00" height="6" fill="#0c9084"/><rect x="425.72" y="160" width="3.00" height="6" fill="#0c9084"/><rect x="446.00" y="160" width="3.00" height="6" fill="#e8b810"/><rect x="450.12" y="160" width="3.00" height="6" fill="#e8b810"/><rect x="454.24" y="160" width="3.00" height="6" fill="#e8b810"/><rect x="458.36" y="160" width="3.00" height="6" fill="#e8b810"/><rect x="462.48" y="160" width="3.00" height="6" fill="#e8b810"/><rect x="466.60" y="160" width="3.00" height="6" fill="#e8b810"/><rect x="490.00" y="160" width="3.00" height="6" fill="#ff8a40"/><rect x="494.12" y="160" width="3.00" height="6" fill="#ff8a40"/><rect x="498.24" y="160" width="3.00" height="6" fill="#ff8a40"/><rect x="502.36" y="160" width="3.00" height="6" fill="#ff8a40"/><rect x="506.48" y="160" width="3.00" height="6" fill="#ff8a40"/><rect x="535.00" y="160" width="3.00" height="6" fill="#860a82"/><rect x="539.12" y="160" width="3.00" height="6" fill="#860a82"/><rect x="543.24" y="160" width="3.00" height="6" fill="#860a82"/><rect x="547.36" y="160" width="3.00" height="6" fill="#860a82"/><rect x="551.48" y="160" width="3.00" height="6" fill="#860a82"/><rect x="555.60" y="160" width="3.00" height="6" fill="#860a82"/><rect x="559.72" y="160" width="3.00" height="6" fill="#860a82"/><rect x="563.84" y="160" width="3.00" height="6" fill="#860a82"/><rect x="567.96" y="160" width="3.00" height="6" fill="#860a82"/><rect x="572.08" y="160" width="3.00" height="6" fill="#860a82"/><rect x="356.00" y="174" width="3.00" height="6" fill="#1a8cf0"/><rect x="360.12" y="174" width="3.00" height="6" fill="#1a8cf0"/><rect x="364.24" y="174" width="3.00" height="6" fill="#1a8cf0"/><rect x="368.36" y="174" width="3.00" height="6" fill="#1a8cf0"/><rect x="372.48" y="174" width="3.00" height="6" fill="#1a8cf0"/><rect x="376.60" y="174" width="3.00" height="6" fill="#1a8cf0"/><rect x="380.72" y="174" width="3.00" height="6" fill="#1a8cf0"/><rect x="401.00" y="174" width="3.00" height="6" fill="#0c9084"/><rect x="405.12" y="174" width="3.00" height="6" fill="#0c9084"/><rect x="409.24" y="174" width="3.00" height="6" fill="#0c9084"/><rect x="446.00" y="174" width="3.00" height="6" fill="#e8b810"/><rect x="450.12" y="174" width="3.00" height="6" fill="#e8b810"/><rect x="454.24" y="174" width="3.00" height="6" fill="#e8b810"/><rect x="458.36" y="174" width="3.00" height="6" fill="#e8b810"/><rect x="462.48" y="174" width="3.00" height="6" fill="#e8b810"/><rect x="466.60" y="174" width="3.00" height="6" fill="#e8b810"/><rect x="490.00" y="174" width="3.00" height="6" fill="#ff8a40"/><rect x="494.12" y="174" width="3.00" height="6" fill="#ff8a40"/><rect x="498.24" y="174" width="3.00" height="6" fill="#ff8a40"/><rect x="502.36" y="174" width="3.00" height="6" fill="#ff8a40"/><rect x="506.48" y="174" width="3.00" height="6" fill="#ff8a40"/><rect x="510.60" y="174" width="3.00" height="6" fill="#ff8a40"/><rect x="514.72" y="174" width="3.00" height="6" fill="#ff8a40"/><rect x="518.84" y="174" width="3.00" height="6" fill="#ff8a40"/><rect x="535.00" y="174" width="3.00" height="6" fill="#860a82"/><rect x="539.12" y="174" width="3.00" height="6" fill="#860a82"/><rect x="543.24" y="174" width="3.00" height="6" fill="#860a82"/><rect x="547.36" y="174" width="3.00" height="6" fill="#860a82"/><rect x="551.48" y="174" width="3.00" height="6" fill="#860a82"/><rect x="555.60" y="174" width="3.00" height="6" fill="#860a82"/><rect x="559.72" y="174" width="3.00" height="6" fill="#860a82"/><rect x="563.84" y="174" width="3.00" height="6" fill="#860a82"/><rect x="567.96" y="174" width="3.00" height="6" fill="#860a82"/><rect x="572.08" y="174" width="3.00" height="6" fill="#860a82"/><rect x="356.00" y="188" width="3.00" height="6" fill="#1a8cf0"/><rect x="360.12" y="188" width="3.00" height="6" fill="#1a8cf0"/><rect x="364.24" y="188" width="3.00" height="6" fill="#1a8cf0"/><rect x="368.36" y="188" width="3.00" height="6" fill="#1a8cf0"/><rect x="372.48" y="188" width="3.00" height="6" fill="#1a8cf0"/><rect x="401.00" y="188" width="3.00" height="6" fill="#0c9084"/><rect x="405.12" y="188" width="3.00" height="6" fill="#0c9084"/><rect x="409.24" y="188" width="3.00" height="6" fill="#0c9084"/><rect x="446.00" y="188" width="3.00" height="6" fill="#e8b810"/><rect x="490.00" y="188" width="3.00" height="6" fill="#ff8a40"/><rect x="494.12" y="188" width="3.00" height="6" fill="#ff8a40"/><rect x="498.24" y="188" width="3.00" height="6" fill="#ff8a40"/><rect x="502.36" y="188" width="3.00" height="6" fill="#ff8a40"/><rect x="535.00" y="188" width="3.00" height="6" fill="#860a82"/><rect x="539.12" y="188" width="3.00" height="6" fill="#860a82"/><rect x="543.24" y="188" width="3.00" height="6" fill="#860a82"/><rect x="547.36" y="188" width="3.00" height="6" fill="#860a82"/><rect x="551.48" y="188" width="3.00" height="6" fill="#860a82"/><rect x="555.60" y="188" width="3.00" height="6" fill="#860a82"/><rect x="559.72" y="188" width="3.00" height="6" fill="#860a82"/><rect x="563.84" y="188" width="3.00" height="6" fill="#860a82"/><rect x="567.96" y="188" width="3.00" height="6" fill="#860a82"/><rect x="572.08" y="188" width="3.00" height="6" fill="#860a82"/><rect x="356.00" y="202" width="3.00" height="6" fill="#1a8cf0"/><rect x="360.12" y="202" width="3.00" height="6" fill="#1a8cf0"/><rect x="364.24" y="202" width="3.00" height="6" fill="#1a8cf0"/><rect x="368.36" y="202" width="3.00" height="6" fill="#1a8cf0"/><rect x="401.00" y="202" width="3.00" height="6" fill="#0c9084"/><rect x="405.12" y="202" width="3.00" height="6" fill="#0c9084"/><rect x="446.00" y="202" width="3.00" height="6" fill="#e8b810"/><rect x="450.12" y="202" width="3.00" height="6" fill="#e8b810"/><rect x="454.24" y="202" width="3.00" height="6" fill="#e8b810"/><rect x="458.36" y="202" width="3.00" height="6" fill="#e8b810"/><rect x="462.48" y="202" width="3.00" height="6" fill="#e8b810"/><rect x="466.60" y="202" width="3.00" height="6" fill="#e8b810"/><rect x="470.72" y="202" width="3.00" height="6" fill="#e8b810"/><rect x="474.84" y="202" width="3.00" height="6" fill="#e8b810"/><rect x="490.00" y="202" width="3.00" height="6" fill="#ff8a40"/><rect x="494.12" y="202" width="3.00" height="6" fill="#ff8a40"/><rect x="498.24" y="202" width="3.00" height="6" fill="#ff8a40"/><rect x="502.36" y="202" width="3.00" height="6" fill="#ff8a40"/><rect x="506.48" y="202" width="3.00" height="6" fill="#ff8a40"/><rect x="510.60" y="202" width="3.00" height="6" fill="#ff8a40"/><rect x="514.72" y="202" width="3.00" height="6" fill="#ff8a40"/><rect x="356.00" y="216" width="3.00" height="6" fill="#1a8cf0"/><rect x="360.12" y="216" width="3.00" height="6" fill="#1a8cf0"/><rect x="364.24" y="216" width="3.00" height="6" fill="#1a8cf0"/><rect x="368.36" y="216" width="3.00" height="6" fill="#1a8cf0"/><rect x="401.00" y="216" width="3.00" height="6" fill="#0c9084"/><rect x="405.12" y="216" width="3.00" height="6" fill="#0c9084"/><rect x="409.24" y="216" width="3.00" height="6" fill="#0c9084"/><rect x="413.36" y="216" width="3.00" height="6" fill="#0c9084"/><rect x="417.48" y="216" width="3.00" height="6" fill="#0c9084"/><rect x="446.00" y="216" width="3.00" height="6" fill="#e8b810"/><rect x="450.12" y="216" width="3.00" height="6" fill="#e8b810"/><rect x="454.24" y="216" width="3.00" height="6" fill="#e8b810"/><rect x="458.36" y="216" width="3.00" height="6" fill="#e8b810"/><rect x="535.00" y="216" width="3.00" height="6" fill="#860a82"/><rect x="539.12" y="216" width="3.00" height="6" fill="#860a82"/><rect x="543.24" y="216" width="3.00" height="6" fill="#860a82"/><rect x="547.36" y="216" width="3.00" height="6" fill="#860a82"/><rect x="551.48" y="216" width="3.00" height="6" fill="#860a82"/><rect x="555.60" y="216" width="3.00" height="6" fill="#860a82"/><rect x="559.72" y="216" width="3.00" height="6" fill="#860a82"/><rect x="563.84" y="216" width="3.00" height="6" fill="#860a82"/><rect x="567.96" y="216" width="3.00" height="6" fill="#860a82"/><rect x="356.00" y="230" width="3.00" height="6" fill="#1a8cf0"/><rect x="360.12" y="230" width="3.00" height="6" fill="#1a8cf0"/><rect x="364.24" y="230" width="3.00" height="6" fill="#1a8cf0"/><rect x="368.36" y="230" width="3.00" height="6" fill="#1a8cf0"/><rect x="372.48" y="230" width="3.00" height="6" fill="#1a8cf0"/><rect x="401.00" y="230" width="3.00" height="6" fill="#0c9084"/><rect x="405.12" y="230" width="3.00" height="6" fill="#0c9084"/><rect x="409.24" y="230" width="3.00" height="6" fill="#0c9084"/><rect x="413.36" y="230" width="3.00" height="6" fill="#0c9084"/><rect x="417.48" y="230" width="3.00" height="6" fill="#0c9084"/><rect x="446.00" y="230" width="3.00" height="6" fill="#e8b810"/><rect x="450.12" y="230" width="3.00" height="6" fill="#e8b810"/><rect x="454.24" y="230" width="3.00" height="6" fill="#e8b810"/><rect x="458.36" y="230" width="3.00" height="6" fill="#e8b810"/><rect x="462.48" y="230" width="3.00" height="6" fill="#e8b810"/><rect x="490.00" y="230" width="3.00" height="6" fill="#ff8a40"/><rect x="494.12" y="230" width="3.00" height="6" fill="#ff8a40"/><rect x="498.24" y="230" width="3.00" height="6" fill="#ff8a40"/><rect x="502.36" y="230" width="3.00" height="6" fill="#ff8a40"/><rect x="506.48" y="230" width="3.00" height="6" fill="#ff8a40"/><rect x="510.60" y="230" width="3.00" height="6" fill="#ff8a40"/><rect x="514.72" y="230" width="3.00" height="6" fill="#ff8a40"/><rect x="518.84" y="230" width="3.00" height="6" fill="#ff8a40"/><rect x="522.96" y="230" width="3.00" height="6" fill="#ff8a40"/><rect x="356.00" y="244" width="3.00" height="6" fill="#1a8cf0"/><rect x="360.12" y="244" width="3.00" height="6" fill="#1a8cf0"/><rect x="364.24" y="244" width="3.00" height="6" fill="#1a8cf0"/><rect x="401.00" y="244" width="3.00" height="6" fill="#0c9084"/><rect x="405.12" y="244" width="3.00" height="6" fill="#0c9084"/><rect x="409.24" y="244" width="3.00" height="6" fill="#0c9084"/><rect x="446.00" y="244" width="3.00" height="6" fill="#e8b810"/><rect x="450.12" y="244" width="3.00" height="6" fill="#e8b810"/><rect x="454.24" y="244" width="3.00" height="6" fill="#e8b810"/><rect x="458.36" y="244" width="3.00" height="6" fill="#e8b810"/><rect x="462.48" y="244" width="3.00" height="6" fill="#e8b810"/><rect x="466.60" y="244" width="3.00" height="6" fill="#e8b810"/><rect x="490.00" y="244" width="3.00" height="6" fill="#ff8a40"/><rect x="494.12" y="244" width="3.00" height="6" fill="#ff8a40"/><rect x="498.24" y="244" width="3.00" height="6" fill="#ff8a40"/><rect x="502.36" y="244" width="3.00" height="6" fill="#ff8a40"/><rect x="356.00" y="258" width="3.00" height="6" fill="#1a8cf0"/><rect x="360.12" y="258" width="3.00" height="6" fill="#1a8cf0"/><rect x="364.24" y="258" width="3.00" height="6" fill="#1a8cf0"/><rect x="368.36" y="258" width="3.00" height="6" fill="#1a8cf0"/><rect x="372.48" y="258" width="3.00" height="6" fill="#1a8cf0"/><rect x="376.60" y="258" width="3.00" height="6" fill="#1a8cf0"/><rect x="380.72" y="258" width="3.00" height="6" fill="#1a8cf0"/><rect x="401.00" y="258" width="3.00" height="6" fill="#0c9084"/><rect x="405.12" y="258" width="3.00" height="6" fill="#0c9084"/><rect x="409.24" y="258" width="3.00" height="6" fill="#0c9084"/><rect x="413.36" y="258" width="3.00" height="6" fill="#0c9084"/><rect x="417.48" y="258" width="3.00" height="6" fill="#0c9084"/><rect x="421.60" y="258" width="3.00" height="6" fill="#0c9084"/><rect x="425.72" y="258" width="3.00" height="6" fill="#0c9084"/><rect x="446.00" y="258" width="3.00" height="6" fill="#e8b810"/><rect x="450.12" y="258" width="3.00" height="6" fill="#e8b810"/><rect x="454.24" y="258" width="3.00" height="6" fill="#e8b810"/><rect x="458.36" y="258" width="3.00" height="6" fill="#e8b810"/><rect x="462.48" y="258" width="3.00" height="6" fill="#e8b810"/><rect x="466.60" y="258" width="3.00" height="6" fill="#e8b810"/><rect x="490.00" y="258" width="3.00" height="6" fill="#ff8a40"/><rect x="494.12" y="258" width="3.00" height="6" fill="#ff8a40"/><rect x="498.24" y="258" width="3.00" height="6" fill="#ff8a40"/><rect x="502.36" y="258" width="3.00" height="6" fill="#ff8a40"/><rect x="506.48" y="258" width="3.00" height="6" fill="#ff8a40"/><rect x="510.60" y="258" width="3.00" height="6" fill="#ff8a40"/><rect x="514.72" y="258" width="3.00" height="6" fill="#ff8a40"/><rect x="518.84" y="258" width="3.00" height="6" fill="#ff8a40"/><rect x="535.00" y="258" width="3.00" height="6" fill="#860a82"/><rect x="539.12" y="258" width="3.00" height="6" fill="#860a82"/><rect x="543.24" y="258" width="3.00" height="6" fill="#860a82"/><rect x="547.36" y="258" width="3.00" height="6" fill="#860a82"/><rect x="551.48" y="258" width="3.00" height="6" fill="#860a82"/><rect x="555.60" y="258" width="3.00" height="6" fill="#860a82"/><rect x="356.00" y="272" width="3.00" height="6" fill="#1a8cf0"/><rect x="360.12" y="272" width="3.00" height="6" fill="#1a8cf0"/><rect x="364.24" y="272" width="3.00" height="6" fill="#1a8cf0"/><rect x="368.36" y="272" width="3.00" height="6" fill="#1a8cf0"/><rect x="372.48" y="272" width="3.00" height="6" fill="#1a8cf0"/><rect x="401.00" y="272" width="3.00" height="6" fill="#0c9084"/><rect x="405.12" y="272" width="3.00" height="6" fill="#0c9084"/><rect x="409.24" y="272" width="3.00" height="6" fill="#0c9084"/><rect x="413.36" y="272" width="3.00" height="6" fill="#0c9084"/><rect x="417.48" y="272" width="3.00" height="6" fill="#0c9084"/><rect x="446.00" y="272" width="3.00" height="6" fill="#e8b810"/><rect x="450.12" y="272" width="3.00" height="6" fill="#e8b810"/><rect x="454.24" y="272" width="3.00" height="6" fill="#e8b810"/><rect x="458.36" y="272" width="3.00" height="6" fill="#e8b810"/><rect x="462.48" y="272" width="3.00" height="6" fill="#e8b810"/><rect x="466.60" y="272" width="3.00" height="6" fill="#e8b810"/><rect x="490.00" y="272" width="3.00" height="6" fill="#ff8a40"/><rect x="494.12" y="272" width="3.00" height="6" fill="#ff8a40"/><rect x="498.24" y="272" width="3.00" height="6" fill="#ff8a40"/><rect x="502.36" y="272" width="3.00" height="6" fill="#ff8a40"/><rect x="506.48" y="272" width="3.00" height="6" fill="#ff8a40"/><rect x="510.60" y="272" width="3.00" height="6" fill="#ff8a40"/><rect x="514.72" y="272" width="3.00" height="6" fill="#ff8a40"/><rect x="518.84" y="272" width="3.00" height="6" fill="#ff8a40"/><rect x="522.96" y="272" width="3.00" height="6" fill="#ff8a40"/><rect x="356.00" y="286" width="3.00" height="6" fill="#1a8cf0"/><rect x="360.12" y="286" width="3.00" height="6" fill="#1a8cf0"/><rect x="364.24" y="286" width="3.00" height="6" fill="#1a8cf0"/><rect x="368.36" y="286" width="3.00" height="6" fill="#1a8cf0"/><rect x="372.48" y="286" width="3.00" height="6" fill="#1a8cf0"/><rect x="376.60" y="286" width="3.00" height="6" fill="#1a8cf0"/><rect x="401.00" y="286" width="3.00" height="6" fill="#0c9084"/><rect x="405.12" y="286" width="3.00" height="6" fill="#0c9084"/><rect x="409.24" y="286" width="3.00" height="6" fill="#0c9084"/><rect x="446.00" y="286" width="3.00" height="6" fill="#e8b810"/><rect x="450.12" y="286" width="3.00" height="6" fill="#e8b810"/><rect x="454.24" y="286" width="3.00" height="6" fill="#e8b810"/><rect x="458.36" y="286" width="3.00" height="6" fill="#e8b810"/><rect x="462.48" y="286" width="3.00" height="6" fill="#e8b810"/><rect x="466.60" y="286" width="3.00" height="6" fill="#e8b810"/><rect x="470.72" y="286" width="3.00" height="6" fill="#e8b810"/><rect x="474.84" y="286" width="3.00" height="6" fill="#e8b810"/><rect x="478.96" y="286" width="3.00" height="6" fill="#e8b810"/><rect x="490.00" y="286" width="3.00" height="6" fill="#ff8a40"/><rect x="494.12" y="286" width="3.00" height="6" fill="#ff8a40"/><rect x="498.24" y="286" width="3.00" height="6" fill="#ff8a40"/><rect x="502.36" y="286" width="3.00" height="6" fill="#ff8a40"/><rect x="506.48" y="286" width="3.00" height="6" fill="#ff8a40"/><rect x="510.60" y="286" width="3.00" height="6" fill="#ff8a40"/><rect x="514.72" y="286" width="3.00" height="6" fill="#ff8a40"/><rect x="518.84" y="286" width="3.00" height="6" fill="#ff8a40"/><rect x="522.96" y="286" width="3.00" height="6" fill="#ff8a40"/><rect x="527.08" y="286" width="3.00" height="6" fill="#ff8a40"/><rect x="356.00" y="300" width="3.00" height="6" fill="#1a8cf0"/><rect x="360.12" y="300" width="3.00" height="6" fill="#1a8cf0"/><rect x="364.24" y="300" width="3.00" height="6" fill="#1a8cf0"/><rect x="368.36" y="300" width="3.00" height="6" fill="#1a8cf0"/><rect x="372.48" y="300" width="3.00" height="6" fill="#1a8cf0"/><rect x="401.00" y="300" width="3.00" height="6" fill="#0c9084"/><rect x="405.12" y="300" width="3.00" height="6" fill="#0c9084"/><rect x="409.24" y="300" width="3.00" height="6" fill="#0c9084"/><rect x="446.00" y="300" width="3.00" height="6" fill="#e8b810"/><rect x="450.12" y="300" width="3.00" height="6" fill="#e8b810"/><rect x="454.24" y="300" width="3.00" height="6" fill="#e8b810"/><rect x="458.36" y="300" width="3.00" height="6" fill="#e8b810"/><rect x="462.48" y="300" width="3.00" height="6" fill="#e8b810"/><rect x="466.60" y="300" width="3.00" height="6" fill="#e8b810"/><rect x="470.72" y="300" width="3.00" height="6" fill="#e8b810"/><rect x="474.84" y="300" width="3.00" height="6" fill="#e8b810"/><rect x="490.00" y="300" width="3.00" height="6" fill="#ff8a40"/><rect x="494.12" y="300" width="3.00" height="6" fill="#ff8a40"/><rect x="498.24" y="300" width="3.00" height="6" fill="#ff8a40"/><rect x="502.36" y="300" width="3.00" height="6" fill="#ff8a40"/><rect x="506.48" y="300" width="3.00" height="6" fill="#ff8a40"/><rect x="510.60" y="300" width="3.00" height="6" fill="#ff8a40"/><rect x="514.72" y="300" width="3.00" height="6" fill="#ff8a40"/><rect x="518.84" y="300" width="3.00" height="6" fill="#ff8a40"/><rect x="522.96" y="300" width="3.00" height="6" fill="#ff8a40"/><rect x="527.08" y="300" width="3.00" height="6" fill="#ff8a40"/><rect x="356.00" y="314" width="3.00" height="6" fill="#1a8cf0"/><rect x="360.12" y="314" width="3.00" height="6" fill="#1a8cf0"/><rect x="364.24" y="314" width="3.00" height="6" fill="#1a8cf0"/><rect x="368.36" y="314" width="3.00" height="6" fill="#1a8cf0"/><rect x="372.48" y="314" width="3.00" height="6" fill="#1a8cf0"/><rect x="401.00" y="314" width="3.00" height="6" fill="#0c9084"/><rect x="405.12" y="314" width="3.00" height="6" fill="#0c9084"/><rect x="409.24" y="314" width="3.00" height="6" fill="#0c9084"/><rect x="413.36" y="314" width="3.00" height="6" fill="#0c9084"/><rect x="417.48" y="314" width="3.00" height="6" fill="#0c9084"/><rect x="421.60" y="314" width="3.00" height="6" fill="#0c9084"/><rect x="425.72" y="314" width="3.00" height="6" fill="#0c9084"/><rect x="446.00" y="314" width="3.00" height="6" fill="#e8b810"/><rect x="450.12" y="314" width="3.00" height="6" fill="#e8b810"/><rect x="454.24" y="314" width="3.00" height="6" fill="#e8b810"/><rect x="458.36" y="314" width="3.00" height="6" fill="#e8b810"/><rect x="462.48" y="314" width="3.00" height="6" fill="#e8b810"/><rect x="466.60" y="314" width="3.00" height="6" fill="#e8b810"/><rect x="470.72" y="314" width="3.00" height="6" fill="#e8b810"/><rect x="490.00" y="314" width="3.00" height="6" fill="#ff8a40"/><rect x="494.12" y="314" width="3.00" height="6" fill="#ff8a40"/><rect x="498.24" y="314" width="3.00" height="6" fill="#ff8a40"/><rect x="502.36" y="314" width="3.00" height="6" fill="#ff8a40"/><rect x="506.48" y="314" width="3.00" height="6" fill="#ff8a40"/><rect x="510.60" y="314" width="3.00" height="6" fill="#ff8a40"/><rect x="356.00" y="328" width="3.00" height="6" fill="#1a8cf0"/><rect x="360.12" y="328" width="3.00" height="6" fill="#1a8cf0"/><rect x="364.24" y="328" width="3.00" height="6" fill="#1a8cf0"/><rect x="368.36" y="328" width="3.00" height="6" fill="#1a8cf0"/><rect x="372.48" y="328" width="3.00" height="6" fill="#1a8cf0"/><rect x="401.00" y="328" width="3.00" height="6" fill="#0c9084"/><rect x="405.12" y="328" width="3.00" height="6" fill="#0c9084"/><rect x="446.00" y="328" width="3.00" height="6" fill="#e8b810"/><rect x="450.12" y="328" width="3.00" height="6" fill="#e8b810"/><rect x="454.24" y="328" width="3.00" height="6" fill="#e8b810"/><rect x="458.36" y="328" width="3.00" height="6" fill="#e8b810"/><rect x="462.48" y="328" width="3.00" height="6" fill="#e8b810"/><rect x="466.60" y="328" width="3.00" height="6" fill="#e8b810"/><rect x="470.72" y="328" width="3.00" height="6" fill="#e8b810"/><rect x="474.84" y="328" width="3.00" height="6" fill="#e8b810"/><rect x="490.00" y="328" width="3.00" height="6" fill="#ff8a40"/><rect x="494.12" y="328" width="3.00" height="6" fill="#ff8a40"/><rect x="498.24" y="328" width="3.00" height="6" fill="#ff8a40"/><rect x="502.36" y="328" width="3.00" height="6" fill="#ff8a40"/><rect x="506.48" y="328" width="3.00" height="6" fill="#ff8a40"/><rect x="510.60" y="328" width="3.00" height="6" fill="#ff8a40"/><rect x="514.72" y="328" width="3.00" height="6" fill="#ff8a40"/><rect x="518.84" y="328" width="3.00" height="6" fill="#ff8a40"/><rect x="522.96" y="328" width="3.00" height="6" fill="#ff8a40"/></svg></div>
<div class="sbtn" style="left:658px;top:87px"></div>
<svg style="left:659px;top:88px" width="9" height="8" viewBox="0 0 9 8"><path d="M2 5.3 L4.5 2.8 L7 5.3" fill="none" stroke="#0a6a2c" stroke-width="1.9"/></svg>
<div class="sbtn" style="left:658px;top:98px"></div>
<div style="left:661px;top:101px;width:5px;height:3px;background:#a4c8ac"></div>
<div class="sbtn" style="left:658px;top:320px"></div>
<svg style="left:659px;top:321px" width="9" height="8" viewBox="0 0 9 8"><path d="M2 2.7 L4.5 5.2 L7 2.7" fill="none" stroke="#0a6a2c" stroke-width="1.9"/></svg>
<!-- splitter -->
<div style="left:4px;top:330px;width:667px;height:1px;background:#dcdcdc"></div>
<div style="left:4px;top:331px;width:667px;height:1px;background:#a8a8a8"></div>
<div style="left:4px;top:332px;width:667px;height:4px;background:#f0f0f0"></div>
<div style="left:4px;top:336px;width:667px;height:1px;background:#b8b8b8"></div>
<!-- panel 2 -->
<div style="left:4px;top:337px;width:667px;height:113px;background:#fcfcfc"></div>
<div style="left:6px;top:338px;font-size:8.3px;font-weight:bold;line-height:11px;white-space:nowrap;color:#000;-webkit-text-stroke:0.3px #000">Новые шаблоны</div>
<div style="left:5px;top:350px;width:651px;height:99px;background:#fff"></div>
<div style="left:656px;top:350px;width:15px;height:99px;background:#f5f7f5"></div>
<div style="left:0;top:0;width:675px;height:449px;overflow:hidden"><div style="left:5px;top:350px;width:666px;height:1px;background:#dcdcdc"></div><div style="left:4px;top:350px;width:1px;height:99px;background:#d0d0d0"></div><div class="hdr" style="left:5px;top:351px;width:499px"></div><div class="hc" style="left:5px;top:351px;width:20px"><span class="x"></span></div><div class="hc" style="left:24px;top:351px;width:36px"><span class="x">Курс в...</span></div><div class="hc" style="left:59px;top:351px;width:37px"><span class="x">Символ</span></div><div class="hc" style="left:95px;top:351px;width:39px"><span class="x">Интерв...</span></div><div class="hc" style="left:133px;top:351px;width:65px"><span class="x">Образец</span></div><div class="hc" style="left:197px;top:351px;width:15px"><span class="x"></span></div><div class="hc" style="left:211px;top:351px;width:53px"><span class="x">Время</span></div><div class="hc" style="left:263px;top:351px;width:45px"><span class="x">Тренд</span></div><div class="hc" style="left:307px;top:351px;width:19px"><span class="x">Д...</span></div><div class="hc" style="left:325px;top:351px;width:46px"><span class="x">Качество</span></div><div class="hc" style="left:370px;top:351px;width:46px"><span class="x">Исходны...</span></div><div class="hc" style="left:415px;top:351px;width:45px"><span class="x">Согласно...</span></div><div class="hc" style="left:459px;top:351px;width:46px"><span class="x">Четкость</span></div><div class="rh" style="left:5px;top:365px;width:20px"></div><div class="row sel" style="left:25px;top:365px;width:480px"></div><div class="c s" style="left:25px;top:365px;width:35px"><span class="u">FOREX</span></div><div class="c s" style="left:60px;top:365px;width:36px"><span class="u">EURCAD</span></div><div class="c s" style="left:96px;top:365px;width:38px"><span class="x">15 мин...</span></div><div class="c s" style="left:134px;top:365px;width:64px"><span class="x">Начало падения</span></div><div class="c s" style="left:198px;top:365px;width:14px"></div><div class="c s" style="left:212px;top:365px;width:52px"><span class="x">19.3 01:30</span></div><div class="c s" style="left:264px;top:365px;width:44px"><span class="x">Продолж...</span></div><div class="c s" style="left:308px;top:365px;width:18px"><span class="x">44</span></div><div class="c s" style="left:326px;top:365px;width:45px"></div><div class="c s" style="left:371px;top:365px;width:45px"></div><div class="c s" style="left:416px;top:365px;width:44px"></div><div class="c s" style="left:460px;top:365px;width:45px"></div><svg class="ar" style="left:202px;top:369px" width="5" height="7" viewBox="0 0 7 9"><path d="M3.5 0.6 L6.6 4 L4.8 4 L4.8 8.4 L2.2 8.4 L2.2 4 L0.4 4 Z" fill="#ffffff" stroke="#ffffff" stroke-width="0.6"/></svg><div class="rh" style="left:5px;top:379px;width:20px"></div><div class="row" style="left:25px;top:379px;width:480px"></div><div class="c" style="left:25px;top:379px;width:35px"><span class="u">FOREX</span></div><div class="c" style="left:60px;top:379px;width:36px"><span class="u">EURAUD</span></div><div class="c" style="left:96px;top:379px;width:38px"><span class="x">15 мин...</span></div><div class="c" style="left:134px;top:379px;width:64px"><span class="x">Начало роста</span></div><div class="c" style="left:198px;top:379px;width:14px"></div><div class="c" style="left:212px;top:379px;width:52px"><span class="x">19.3 01:30</span></div><div class="c" style="left:264px;top:379px;width:44px"><span class="x">Продолж...</span></div><div class="c" style="left:308px;top:379px;width:18px"><span class="x">33</span></div><div class="c" style="left:326px;top:379px;width:45px"></div><div class="c" style="left:371px;top:379px;width:45px"></div><div class="c" style="left:416px;top:379px;width:44px"></div><div class="c" style="left:460px;top:379px;width:45px"></div><svg class="ar" style="left:201px;top:382px" width="7" height="9" viewBox="0 0 7 9"><path d="M3.5 0.6 L6.6 4 L4.8 4 L4.8 8.4 L2.2 8.4 L2.2 4 L0.4 4 Z" fill="#ffffff" stroke="#1a1a1a" stroke-width="0.9"/></svg><div class="rh" style="left:5px;top:393px;width:20px"></div><div class="row" style="left:25px;top:393px;width:480px"></div><div class="c" style="left:25px;top:393px;width:35px"><span class="u">FOREX</span></div><div class="c" style="left:60px;top:393px;width:36px"><span class="u">EURAUD</span></div><div class="c" style="left:96px;top:393px;width:38px"><span class="x">15 мин...</span></div><div class="c" style="left:134px;top:393px;width:64px"><span class="x">Начало роста</span></div><div class="c" style="left:198px;top:393px;width:14px"></div><div class="c" style="left:212px;top:393px;width:52px"><span class="x">19.3 01:30</span></div><div class="c" style="left:264px;top:393px;width:44px"><span class="x">Аннулир...</span></div><div class="c" style="left:308px;top:393px;width:18px"><span class="x">41</span></div><div class="c" style="left:326px;top:393px;width:45px"></div><div class="c" style="left:371px;top:393px;width:45px"></div><div class="c" style="left:416px;top:393px;width:44px"></div><div class="c" style="left:460px;top:393px;width:45px"></div><svg class="ar" style="left:201px;top:396px" width="7" height="9" viewBox="0 0 7 9"><path d="M3.5 0.6 L6.6 4 L4.8 4 L4.8 8.4 L2.2 8.4 L2.2 4 L0.4 4 Z" fill="#ffffff" stroke="#1a1a1a" stroke-width="0.9"/></svg><div class="rh" style="left:5px;top:407px;width:20px"></div><div class="row" style="left:25px;top:407px;width:480px"></div><div class="c" style="left:25px;top:407px;width:35px"><span class="u">FOREX</span></div><div class="c" style="left:60px;top:407px;width:36px"><span class="u">EURAUD</span></div><div class="c" style="left:96px;top:407px;width:38px"><span class="x">15 мин...</span></div><div class="c" style="left:134px;top:407px;width:64px"><span class="x">ломаная линия</span></div><div class="c" style="left:198px;top:407px;width:14px"></div><div class="c" style="left:212px;top:407px;width:52px"><span class="x">19.3 01:30</span></div><div class="c" style="left:264px;top:407px;width:44px"><span class="x">Продолж...</span></div><div class="c" style="left:308px;top:407px;width:18px"><span class="x">88</span></div><div class="c" style="left:326px;top:407px;width:45px"></div><div class="c" style="left:371px;top:407px;width:45px"></div><div class="c" style="left:416px;top:407px;width:44px"></div><div class="c" style="left:460px;top:407px;width:45px"></div><svg class="ar" style="left:201px;top:410px" width="7" height="9" viewBox="0 0 7 9"><path d="M3.5 8.4 L6.6 5 L4.8 5 L4.8 0.6 L2.2 0.6 L2.2 5 L0.4 5 Z" fill="#ffffff" stroke="#1a1a1a" stroke-width="0.9"/></svg><div class="rh" style="left:5px;top:421px;width:20px"></div><div class="row" style="left:25px;top:421px;width:480px"></div><div class="c" style="left:25px;top:421px;width:35px"><span class="u">FOREX</span></div><div class="c" style="left:60px;top:421px;width:36px"><span class="u">USDCAD</span></div><div class="c" style="left:96px;top:421px;width:38px"><span class="x">15 мин...</span></div><div class="c" style="left:134px;top:421px;width:64px"><span class="x">Канал закрыт</span></div><div class="c" style="left:198px;top:421px;width:14px"></div><div class="c" style="left:212px;top:421px;width:52px"><span class="x">19.3 01:30</span></div><div class="c" style="left:264px;top:421px;width:44px"><span class="x">Продолж...</span></div><div class="c" style="left:308px;top:421px;width:18px"><span class="x">66</span></div><div class="c" style="left:326px;top:421px;width:45px"></div><div class="c" style="left:371px;top:421px;width:45px"></div><div class="c" style="left:416px;top:421px;width:44px"></div><div class="c" style="left:460px;top:421px;width:45px"></div><svg class="ar" style="left:201px;top:424px" width="7" height="9" viewBox="0 0 7 9"><path d="M3.5 8.4 L6.6 5 L4.8 5 L4.8 0.6 L2.2 0.6 L2.2 5 L0.4 5 Z" fill="#ffffff" stroke="#1a1a1a" stroke-width="0.9"/></svg><div class="rh" style="left:5px;top:435px;width:20px"></div><div class="row" style="left:25px;top:435px;width:480px"></div><div class="c" style="left:25px;top:435px;width:35px"><span class="u">FOREX</span></div><div class="c" style="left:60px;top:435px;width:36px"><span class="u">EURAUD</span></div><div class="c" style="left:96px;top:435px;width:38px"><span class="x">30 мин...</span></div><div class="c" style="left:134px;top:435px;width:64px"><span class="x">ломаная линия</span></div><div class="c" style="left:198px;top:435px;width:14px"></div><div class="c" style="left:212px;top:435px;width:52px"><span class="x">19.3 01:30</span></div><div class="c" style="left:264px;top:435px;width:44px"><span class="x">Продолж...</span></div><div class="c" style="left:308px;top:435px;width:18px"><span class="x">44</span></div><div class="c" style="left:326px;top:435px;width:45px"></div><div class="c" style="left:371px;top:435px;width:45px"></div><div class="c" style="left:416px;top:435px;width:44px"></div><div class="c" style="left:460px;top:435px;width:45px"></div><svg class="ar" style="left:201px;top:438px" width="7" height="9" viewBox="0 0 7 9"><path d="M3.5 8.4 L6.6 5 L4.8 5 L4.8 0.6 L2.2 0.6 L2.2 5 L0.4 5 Z" fill="#ffffff" stroke="#1a1a1a" stroke-width="0.9"/></svg><svg style="left:0;top:0" width="675" height="466"><rect x="329.00" y="369" width="3.00" height="6" fill="#1a8cf0"/><rect x="333.12" y="369" width="3.00" height="6" fill="#1a8cf0"/><rect x="337.24" y="369" width="3.00" height="6" fill="#1a8cf0"/><rect x="341.36" y="369" width="3.00" height="6" fill="#1a8cf0"/><rect x="345.48" y="369" width="3.00" height="6" fill="#1a8cf0"/><rect x="349.60" y="369" width="3.00" height="6" fill="#1a8cf0"/><rect x="353.72" y="369" width="3.00" height="6" fill="#1a8cf0"/><rect x="357.84" y="369" width="3.00" height="6" fill="#1a8cf0"/><rect x="374.00" y="369" width="3.00" height="6" fill="#0c9084"/><rect x="378.12" y="369" width="3.00" height="6" fill="#0c9084"/><rect x="382.24" y="369" width="3.00" height="6" fill="#0c9084"/><rect x="386.36" y="369" width="3.00" height="6" fill="#0c9084"/><rect x="390.48" y="369" width="3.00" height="6" fill="#0c9084"/><rect x="394.60" y="369" width="3.00" height="6" fill="#0c9084"/><rect x="398.72" y="369" width="3.00" height="6" fill="#0c9084"/><rect x="402.84" y="369" width="3.00" height="6" fill="#0c9084"/><rect x="406.96" y="369" width="3.00" height="6" fill="#0c9084"/><rect x="411.08" y="369" width="3.00" height="6" fill="#0c9084"/><rect x="419.00" y="369" width="3.00" height="6" fill="#e8b810"/><rect x="423.12" y="369" width="3.00" height="6" fill="#e8b810"/><rect x="427.24" y="369" width="3.00" height="6" fill="#e8b810"/><rect x="431.36" y="369" width="3.00" height="6" fill="#e8b810"/><rect x="435.48" y="369" width="3.00" height="6" fill="#e8b810"/><rect x="463.00" y="369" width="3.00" height="6" fill="#ff8a40"/><rect x="467.12" y="369" width="3.00" height="6" fill="#ff8a40"/><rect x="471.24" y="369" width="3.00" height="6" fill="#ff8a40"/><rect x="475.36" y="369" width="3.00" height="6" fill="#ff8a40"/><rect x="479.48" y="369" width="3.00" height="6" fill="#ff8a40"/><rect x="483.60" y="369" width="3.00" height="6" fill="#ff8a40"/><rect x="487.72" y="369" width="3.00" height="6" fill="#ff8a40"/><rect x="491.84" y="369" width="3.00" height="6" fill="#ff8a40"/><rect x="329.00" y="383" width="3.00" height="6" fill="#1a8cf0"/><rect x="333.12" y="383" width="3.00" height="6" fill="#1a8cf0"/><rect x="337.24" y="383" width="3.00" height="6" fill="#1a8cf0"/><rect x="341.36" y="383" width="3.00" height="6" fill="#1a8cf0"/><rect x="345.48" y="383" width="3.00" height="6" fill="#1a8cf0"/><rect x="349.60" y="383" width="3.00" height="6" fill="#1a8cf0"/><rect x="374.00" y="383" width="3.00" height="6" fill="#0c9084"/><rect x="378.12" y="383" width="3.00" height="6" fill="#0c9084"/><rect x="382.24" y="383" width="3.00" height="6" fill="#0c9084"/><rect x="386.36" y="383" width="3.00" height="6" fill="#0c9084"/><rect x="390.48" y="383" width="3.00" height="6" fill="#0c9084"/><rect x="394.60" y="383" width="3.00" height="6" fill="#0c9084"/><rect x="419.00" y="383" width="3.00" height="6" fill="#e8b810"/><rect x="423.12" y="383" width="3.00" height="6" fill="#e8b810"/><rect x="427.24" y="383" width="3.00" height="6" fill="#e8b810"/><rect x="463.00" y="383" width="3.00" height="6" fill="#ff8a40"/><rect x="467.12" y="383" width="3.00" height="6" fill="#ff8a40"/><rect x="471.24" y="383" width="3.00" height="6" fill="#ff8a40"/><rect x="475.36" y="383" width="3.00" height="6" fill="#ff8a40"/><rect x="479.48" y="383" width="3.00" height="6" fill="#ff8a40"/><rect x="483.60" y="383" width="3.00" height="6" fill="#ff8a40"/><rect x="487.72" y="383" width="3.00" height="6" fill="#ff8a40"/><rect x="491.84" y="383" width="3.00" height="6" fill="#ff8a40"/><rect x="495.96" y="383" width="3.00" height="6" fill="#ff8a40"/><rect x="500.08" y="383" width="3.00" height="6" fill="#ff8a40"/><rect x="329.00" y="397" width="3.00" height="6" fill="#1a8cf0"/><rect x="333.12" y="397" width="3.00" height="6" fill="#1a8cf0"/><rect x="337.24" y="397" width="3.00" height="6" fill="#1a8cf0"/><rect x="341.36" y="397" width="3.00" height="6" fill="#1a8cf0"/><rect x="345.48" y="397" width="3.00" height="6" fill="#1a8cf0"/><rect x="349.60" y="397" width="3.00" height="6" fill="#1a8cf0"/><rect x="374.00" y="397" width="3.00" height="6" fill="#0c9084"/><rect x="378.12" y="397" width="3.00" height="6" fill="#0c9084"/><rect x="382.24" y="397" width="3.00" height="6" fill="#0c9084"/><rect x="386.36" y="397" width="3.00" height="6" fill="#0c9084"/><rect x="419.00" y="397" width="3.00" height="6" fill="#e8b810"/><rect x="423.12" y="397" width="3.00" height="6" fill="#e8b810"/><rect x="427.24" y="397" width="3.00" height="6" fill="#e8b810"/><rect x="431.36" y="397" width="3.00" height="6" fill="#e8b810"/><rect x="463.00" y="397" width="3.00" height="6" fill="#ff8a40"/><rect x="467.12" y="397" width="3.00" height="6" fill="#ff8a40"/><rect x="471.24" y="397" width="3.00" height="6" fill="#ff8a40"/><rect x="475.36" y="397" width="3.00" height="6" fill="#ff8a40"/><rect x="479.48" y="397" width="3.00" height="6" fill="#ff8a40"/><rect x="483.60" y="397" width="3.00" height="6" fill="#ff8a40"/><rect x="487.72" y="397" width="3.00" height="6" fill="#ff8a40"/><rect x="491.84" y="397" width="3.00" height="6" fill="#ff8a40"/><rect x="495.96" y="397" width="3.00" height="6" fill="#ff8a40"/><rect x="500.08" y="397" width="3.00" height="6" fill="#ff8a40"/><rect x="329.00" y="411" width="3.00" height="6" fill="#1a8cf0"/><rect x="333.12" y="411" width="3.00" height="6" fill="#1a8cf0"/><rect x="337.24" y="411" width="3.00" height="6" fill="#1a8cf0"/><rect x="341.36" y="411" width="3.00" height="6" fill="#1a8cf0"/><rect x="374.00" y="411" width="3.00" height="6" fill="#0c9084"/><rect x="419.00" y="411" width="3.00" height="6" fill="#e8b810"/><rect x="423.12" y="411" width="3.00" height="6" fill="#e8b810"/><rect x="427.24" y="411" width="3.00" height="6" fill="#e8b810"/><rect x="431.36" y="411" width="3.00" height="6" fill="#e8b810"/><rect x="435.48" y="411" width="3.00" height="6" fill="#e8b810"/><rect x="439.60" y="411" width="3.00" height="6" fill="#e8b810"/><rect x="443.72" y="411" width="3.00" height="6" fill="#e8b810"/><rect x="447.84" y="411" width="3.00" height="6" fill="#e8b810"/><rect x="463.00" y="411" width="3.00" height="6" fill="#ff8a40"/><rect x="467.12" y="411" width="3.00" height="6" fill="#ff8a40"/><rect x="471.24" y="411" width="3.00" height="6" fill="#ff8a40"/><rect x="329.00" y="425" width="3.00" height="6" fill="#1a8cf0"/><rect x="333.12" y="425" width="3.00" height="6" fill="#1a8cf0"/><rect x="337.24" y="425" width="3.00" height="6" fill="#1a8cf0"/><rect x="374.00" y="425" width="3.00" height="6" fill="#0c9084"/><rect x="419.00" y="425" width="3.00" height="6" fill="#e8b810"/><rect x="423.12" y="425" width="3.00" height="6" fill="#e8b810"/><rect x="427.24" y="425" width="3.00" height="6" fill="#e8b810"/><rect x="431.36" y="425" width="3.00" height="6" fill="#e8b810"/><rect x="435.48" y="425" width="3.00" height="6" fill="#e8b810"/><rect x="439.60" y="425" width="3.00" height="6" fill="#e8b810"/><rect x="443.72" y="425" width="3.00" height="6" fill="#e8b810"/><rect x="447.84" y="425" width="3.00" height="6" fill="#e8b810"/><rect x="463.00" y="425" width="3.00" height="6" fill="#ff8a40"/><rect x="467.12" y="425" width="3.00" height="6" fill="#ff8a40"/><rect x="329.00" y="439" width="3.00" height="6" fill="#1a8cf0"/><rect x="333.12" y="439" width="3.00" height="6" fill="#1a8cf0"/><rect x="337.24" y="439" width="3.00" height="6" fill="#1a8cf0"/><rect x="341.36" y="439" width="3.00" height="6" fill="#1a8cf0"/><rect x="345.48" y="439" width="3.00" height="6" fill="#1a8cf0"/><rect x="374.00" y="439" width="3.00" height="6" fill="#0c9084"/><rect x="419.00" y="439" width="3.00" height="6" fill="#e8b810"/><rect x="423.12" y="439" width="3.00" height="6" fill="#e8b810"/><rect x="427.24" y="439" width="3.00" height="6" fill="#e8b810"/><rect x="431.36" y="439" width="3.00" height="6" fill="#e8b810"/><rect x="435.48" y="439" width="3.00" height="6" fill="#e8b810"/><rect x="439.60" y="439" width="3.00" height="6" fill="#e8b810"/><rect x="443.72" y="439" width="3.00" height="6" fill="#e8b810"/><rect x="447.84" y="439" width="3.00" height="6" fill="#e8b810"/><rect x="463.00" y="439" width="3.00" height="6" fill="#ff8a40"/><rect x="467.12" y="439" width="3.00" height="6" fill="#ff8a40"/><rect x="471.24" y="439" width="3.00" height="6" fill="#ff8a40"/><rect x="475.36" y="439" width="3.00" height="6" fill="#ff8a40"/><rect x="479.48" y="439" width="3.00" height="6" fill="#ff8a40"/><rect x="483.60" y="439" width="3.00" height="6" fill="#ff8a40"/></svg></div>
<div class="sbtn" style="left:658px;top:352px"></div>
<svg style="left:659px;top:353px" width="9" height="8" viewBox="0 0 9 8"><path d="M2 5.3 L4.5 2.8 L7 5.3" fill="none" stroke="#0a6a2c" stroke-width="1.9"/></svg>
<div class="sbtn" style="left:658px;top:362px"></div>
<div style="left:661px;top:365px;width:5px;height:3px;background:#a4c8ac"></div>
<div class="sbtn" style="left:658px;top:436px"></div>
<svg style="left:659px;top:437px" width="9" height="8" viewBox="0 0 9 8"><path d="M2 2.7 L4.5 5.2 L7 2.7" fill="none" stroke="#0a6a2c" stroke-width="1.9"/></svg>
<!-- status bar -->
<div style="left:4px;top:449px;width:667px;height:1px;background:#c0c0c0"></div>
<div style="left:4px;top:450px;width:667px;height:12px;background:#f4f4f4"></div>
<div style="left:602px;top:450px;width:68px;height:12px;border-top:1px solid #b4b4b4;border-left:1px solid #909090;border-bottom:1px solid #fafafa;border-right:1px solid #fafafa"></div>
<div style="left:604px;top:451px;font-size:8.5px;line-height:11px;white-space:nowrap;color:#111;font-family:'Liberation Serif',serif">19.3 10:34</div>
<svg style="left:658px;top:450px" width="12" height="12" viewBox="0 0 12 12"><path d="M11.5 1.5 L1.5 11.5 M11.5 5 L5 11.5 M11.5 8.5 L8.5 11.5" stroke="#b0b0b0" stroke-width="1"/></svg>
<div style="left:1px;top:462px;width:670px;height:1px;background:#d0d0d0"></div>
<div style="left:1px;top:463px;width:670px;height:3px;background:#ececec"></div>
<div style="left:669px;top:70px;width:2px;height:380px;background:#e8eae8"></div>
<div style="left:4px;top:70px;width:1px;height:380px;background:#d4d4d4"></div>
</body></html>
